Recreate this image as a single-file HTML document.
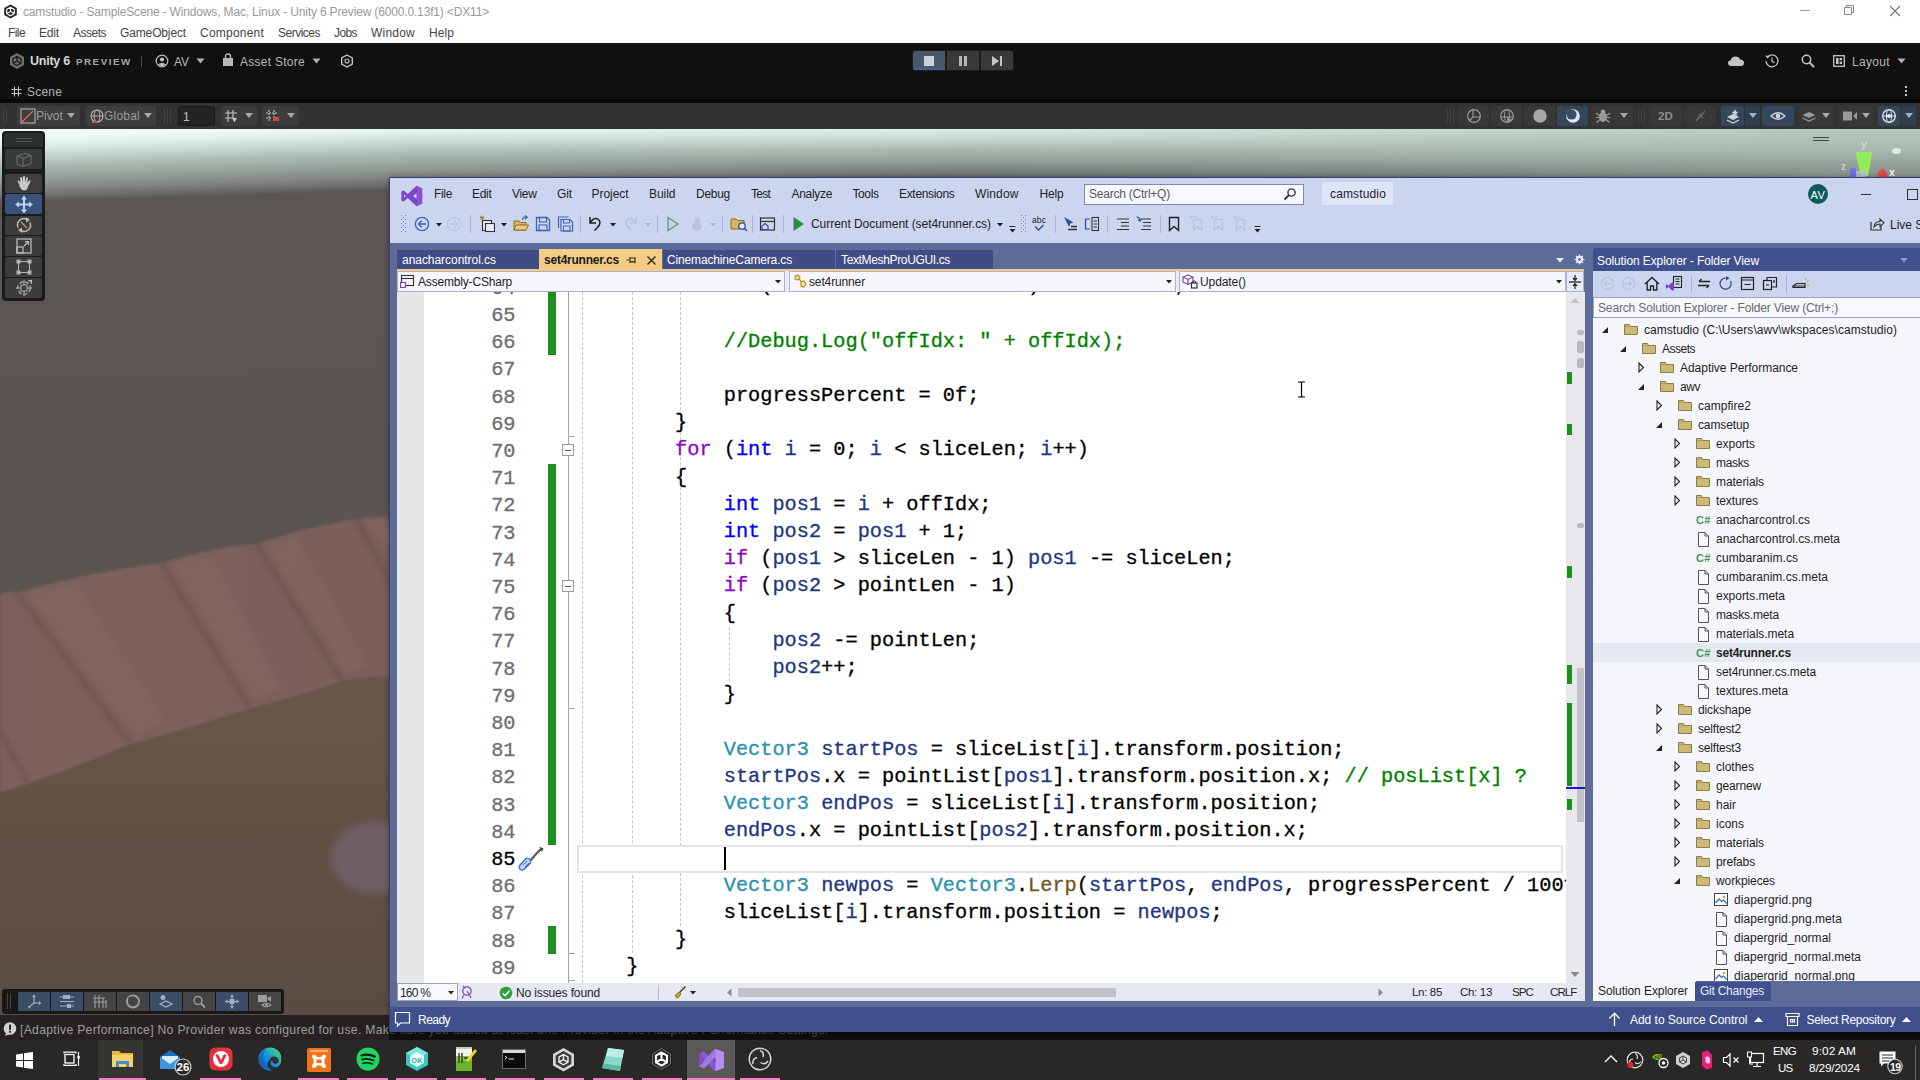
<!DOCTYPE html>
<html lang="en"><head><meta charset="utf-8"><title>camstudio - Unity / Visual Studio</title>
<style>
html,body{margin:0;padding:0;}
body{width:1920px;height:1080px;overflow:hidden;position:relative;background:#5b5653;font-family:"Liberation Sans",sans-serif;font-size:12px;}
div,span,svg{box-sizing:border-box;}
.mono{font-family:"Liberation Mono",monospace;}
#vs{position:absolute;left:0;top:0;width:1920px;height:1080px;overflow:hidden;}
.cl{position:absolute;left:577.7px;height:27.2px;line-height:27.2px;font-family:"Liberation Mono",monospace;font-size:20.3px;white-space:pre;color:#000;-webkit-text-stroke:0.3px currentColor;}
.ln{position:absolute;left:470px;width:45.5px;text-align:right;height:27.2px;line-height:27.2px;font-family:"Liberation Mono",monospace;font-size:20.3px;color:#6e6e6e;-webkit-text-stroke:0.3px currentColor;}
.k{color:#0000ff}.c{color:#8f08c4}.v{color:#1f377f}.t{color:#2b91af}.m{color:#74531f}.g{color:#008000}
</style></head><body>

<div style="position:absolute;left:0;top:128px;width:400px;height:887px;background:linear-gradient(178.2deg,#eefcf6 9.0px,#e0f1ea 17.0px,#cddbd5 26.0px,#a9b9b1 39.0px,#8f9c94 53.0px,#8a8f8c 57.0px,#858685 61.0px,#6d716f 68.0px,#5e5f5d 73.0px,#5b5653 75.0px,#5a5551 400px,#59544f 887px);"></div>
<div style="position:absolute;left:400px;top:128px;width:1520px;height:887px;background:linear-gradient(to bottom,#eefcf6 -3.6px,#e0f1ea 4.4px,#cddbd5 13.4px,#a9b9b1 26.4px,#8f9c94 40.4px,#8a8f8c 44.4px,#858685 48.4px,#6d716f 55.4px,#5e5f5d 60.4px,#5b5653 62.4px,#5a5551 400px,#59544f 887px);"></div>
<div style="position:absolute;left:400px;top:128px;width:1520px;height:60px;background:linear-gradient(to bottom,#dcf1e8 0px,#d9efe6 1px,#c4d6cd 12px,#a8b8af 22px,#96a29a 32px,#7f8883 40px,#6b716e 47px,#626765 50px,#5b5d5b 60px);-webkit-mask-image:linear-gradient(to right,rgba(0,0,0,0) 0px,rgba(0,0,0,1) 550px);mask-image:linear-gradient(to right,rgba(0,0,0,0) 0px,rgba(0,0,0,1) 550px);"></div>
<div style="position:absolute;left:400px;top:128px;width:1520px;height:60px;background:linear-gradient(to bottom,#b8cbc1 0px,#b5c8be 1px,#a9bab0 22px,#8c9891 42px,#838e88 50px,#7a847f 60px);-webkit-mask-image:linear-gradient(to right,rgba(0,0,0,0) 550px,rgba(0,0,0,1) 1450px);mask-image:linear-gradient(to right,rgba(0,0,0,0) 550px,rgba(0,0,0,1) 1450px);"></div>
<svg style="position:absolute;left:0.0px;top:128.0px;" width="400" height="888" viewBox="0 0 400 888"><defs><linearGradient id="gnd" x1="0" y1="0" x2="0" y2="1"><stop offset="0" stop-color="#68574a"/><stop offset="0.3" stop-color="#645347"/><stop offset="0.6" stop-color="#5f4f44"/><stop offset="1" stop-color="#5b4c43"/></linearGradient><linearGradient id="bnd" x1="0" y1="0" x2="1" y2="0"><stop offset="0" stop-color="#7d615d"/><stop offset="1" stop-color="#7a5f5a"/></linearGradient><filter id="bl" x="-10%" y="-10%" width="120%" height="120%"><feGaussianBlur stdDeviation="1.3"/></filter><filter id="bl2" x="-10%" y="-10%" width="120%" height="120%"><feGaussianBlur stdDeviation="2"/></filter><filter id="bl3" x="-20%" y="-20%" width="140%" height="140%"><feGaussianBlur stdDeviation="3.5"/></filter></defs><path d="M0 660 L28 652 L128 612 L250 576 L342 548 L400 545 L400 888 L0 888 Z" fill="url(#gnd)"/><path filter="url(#bl)" d="M0 466.5 Q9 463 17 464.5 Q90 444 161 435 Q210 420 256 416 Q310 398 356 391 Q380 388 400 391 L400 549 Q370 547 342 553 Q300 568 250 580.5 Q190 600 128 617 Q80 638 28 655.5 Q12 661 0 664 Z" fill="url(#bnd)"/><g filter="url(#bl3)" opacity="0.6"><path d="M28 466 L75 456 L165 592 L135 608 Z" fill="#84685f"/><path d="M172 436 L212 428 L282 562 L255 572 Z" fill="#84685f"/><path d="M266 417 L298 409 L370 540 L346 546 Z" fill="#83675f"/><path d="M364 392 L392 390 L400 420 L400 440 Z" fill="#83675f"/></g><g filter="url(#bl2)" stroke="#6d5551" stroke-width="6" fill="none" opacity="0.75"><path d="M17 465 L130 616"/><path d="M161 435 L250 580"/><path d="M256 416 L342 553"/><path d="M0 602 L28 655"/><path d="M356 391 L400 472"/></g><ellipse filter="url(#bl3)" cx="374" cy="730" rx="43" ry="36" fill="#6f6069" opacity="0.9"/></svg>
<div style="position:absolute;left:0.0px;top:0.0px;width:1920.0px;height:43.0px;background:#ffffff;"></div>
<svg style="position:absolute;left:3.0px;top:4.0px;" width="15" height="15" viewBox="0 0 15 15"><path d="M7.5 0.5 L13.8 4 L13.8 11 L7.5 14.5 L1.2 11 L1.2 4 Z" fill="#222"/><path d="M7.5 3.2 L11.3 5.4 L11.3 9.6 L7.5 11.8 L3.7 9.6 L3.7 5.4 Z M7.5 3.2 L7.5 7.5 L3.7 9.6 M7.5 7.5 L11.3 9.6" stroke="#fff" stroke-width="1.1" fill="none"/></svg>
<span style="position:absolute;left:23.0px;top:6.1px;font-size:12.00px;line-height:1;color:#999999;white-space:pre;letter-spacing:-0.158px;">camstudio - SampleScene - Windows, Mac, Linux - Unity 6 Preview (6000.0.13f1) &lt;DX11&gt;</span>
<div style="position:absolute;left:1800.0px;top:10.0px;width:10.0px;height:1.0px;background:#999;"></div>
<svg style="position:absolute;left:1843.0px;top:4.0px;" width="12" height="12" viewBox="0 0 12 12"><path d="M1.5 3.5 H8.5 V10.5 H1.5 Z M3.5 3.5 V1.5 H10.5 V8.5 H8.5" stroke="#888" stroke-width="1" fill="none"/></svg>
<svg style="position:absolute;left:1889.0px;top:5.0px;" width="12" height="12" viewBox="0 0 12 12"><path d="M1 1 L11 11 M11 1 L1 11" stroke="#777" stroke-width="1.1" fill="none"/></svg>
<span style="position:absolute;left:8.0px;top:27.1px;font-size:12.00px;line-height:1;color:#444444;white-space:pre;letter-spacing:-0.584px;">File</span>
<span style="position:absolute;left:39.0px;top:27.1px;font-size:12.00px;line-height:1;color:#444444;white-space:pre;letter-spacing:-0.169px;">Edit</span>
<span style="position:absolute;left:73.0px;top:27.1px;font-size:12.00px;line-height:1;color:#444444;white-space:pre;letter-spacing:-0.502px;">Assets</span>
<span style="position:absolute;left:120.0px;top:27.1px;font-size:12.00px;line-height:1;color:#444444;white-space:pre;letter-spacing:-0.136px;">GameObject</span>
<span style="position:absolute;left:200.0px;top:27.1px;font-size:12.00px;line-height:1;color:#444444;white-space:pre;letter-spacing:0.218px;">Component</span>
<span style="position:absolute;left:278.0px;top:27.1px;font-size:12.00px;line-height:1;color:#444444;white-space:pre;letter-spacing:-0.502px;">Services</span>
<span style="position:absolute;left:334.0px;top:27.1px;font-size:12.00px;line-height:1;color:#444444;white-space:pre;letter-spacing:-0.587px;">Jobs</span>
<span style="position:absolute;left:371.0px;top:27.1px;font-size:12.00px;line-height:1;color:#444444;white-space:pre;letter-spacing:0.220px;">Window</span>
<span style="position:absolute;left:429.0px;top:27.1px;font-size:12.00px;line-height:1;color:#444444;white-space:pre;letter-spacing:0.080px;">Help</span>
<div style="position:absolute;left:0.0px;top:43.0px;width:1920.0px;height:60.0px;background:#101010;"></div>
<div style="position:absolute;left:0.0px;top:99.0px;width:1920.0px;height:4.0px;background:#0a0a0a;"></div>
<svg style="position:absolute;left:8.0px;top:52.0px;" width="18" height="18" viewBox="0 0 18 18"><path d="M9 1 L16 5 L16 13 L9 17 L2 13 L2 5 Z" fill="#6e6e6e"/><path d="M9 4.5 L13 6.8 L13 11.2 L9 13.5 L5 11.2 L5 6.8 Z M9 4.5 L9 9 L5 11.2 M9 9 L13 11.2" stroke="#1a1a1a" stroke-width="1.3" fill="none"/></svg>
<span style="position:absolute;left:30.0px;top:55.4px;font-size:12.50px;line-height:1;color:#d8d8d8;white-space:pre;font-weight:700;letter-spacing:-0.239px;">Unity 6</span>
<span style="position:absolute;left:76.0px;top:56.8px;font-size:9.80px;line-height:1;color:#a8a8a8;white-space:pre;font-weight:700;letter-spacing:1.500px;">PREVIEW</span>
<div style="position:absolute;left:141.0px;top:56.0px;width:1.0px;height:11.0px;background:#4a4a4a;"></div>
<svg style="position:absolute;left:155.0px;top:54.0px;" width="14" height="14" viewBox="0 0 14 14"><circle cx="7" cy="7" r="5.8" stroke="#bdbdbd" stroke-width="1.2" fill="none"/><circle cx="7" cy="5.6" r="2.1" fill="#bdbdbd"/><path d="M3 10.8 Q7 6.5 11 10.8 Q7 13.5 3 10.8 Z" fill="#bdbdbd"/></svg>
<span style="position:absolute;left:174.0px;top:55.6px;font-size:12.00px;line-height:1;color:#b8b8b8;white-space:pre;letter-spacing:-0.059px;">AV</span>
<svg style="position:absolute;left:196.0px;top:58.0px;" width="9" height="6" viewBox="0 0 9 6"><path d="M0.5 0.5 H8.5 L4.5 5.5 Z" fill="#b0b0b0"/></svg>
<svg style="position:absolute;left:222.0px;top:53.0px;" width="12" height="14" viewBox="0 0 12 14"><path d="M1 5 H11 V13 H1 Z" fill="#b8b8b8"/><path d="M3.5 5 V3.5 Q3.5 1 6 1 Q8.5 1 8.5 3.5 V5" stroke="#b8b8b8" stroke-width="1.4" fill="none"/></svg>
<span style="position:absolute;left:240.0px;top:55.6px;font-size:12.00px;line-height:1;color:#b8b8b8;white-space:pre;letter-spacing:0.270px;">Asset Store</span>
<svg style="position:absolute;left:312.0px;top:58.0px;" width="9" height="6" viewBox="0 0 9 6"><path d="M0.5 0.5 H8.5 L4.5 5.5 Z" fill="#b0b0b0"/></svg>
<svg style="position:absolute;left:340.0px;top:54.0px;" width="14" height="14" viewBox="0 0 14 14"><path d="M7 1 L12.3 4 L12.3 10 L7 13 L1.7 10 L1.7 4 Z" stroke="#c4c4c4" stroke-width="1.4" fill="none"/><circle cx="7" cy="7" r="2" stroke="#c4c4c4" stroke-width="1.1" fill="none"/></svg>
<div style="position:absolute;left:912.0px;top:50.0px;width:102.0px;height:21.0px;background:#1c1c1c;border-radius:3px;"></div>
<div style="position:absolute;left:913.0px;top:51.0px;width:32.0px;height:19.0px;background:#46586a;border-radius:3px 0 0 3px;"></div>
<div style="position:absolute;left:913.0px;top:68.0px;width:32.0px;height:2.0px;background:#4a5d8c;border-radius:0 0 0 3px;"></div>
<div style="position:absolute;left:947.0px;top:51.0px;width:32.0px;height:19.0px;background:#3a3a3a;"></div>
<div style="position:absolute;left:981.0px;top:51.0px;width:32.0px;height:19.0px;background:#3a3a3a;border-radius:0 3px 3px 0;"></div>
<div style="position:absolute;left:924.0px;top:56.0px;width:10.0px;height:10.0px;background:#c8d3dd;"></div>
<div style="position:absolute;left:959.0px;top:56.0px;width:3.0px;height:10.0px;background:#b4b4b4;"></div>
<div style="position:absolute;left:964.0px;top:56.0px;width:3.0px;height:10.0px;background:#b4b4b4;"></div>
<svg style="position:absolute;left:991.0px;top:56.0px;" width="12" height="10" viewBox="0 0 12 10"><path d="M1 0 L8 5 L1 10 Z" fill="#c4c4c4"/><path d="M9 0 H11 V10 H9 Z" fill="#c4c4c4"/></svg>
<svg style="position:absolute;left:1727.0px;top:54.0px;" width="18" height="14" viewBox="0 0 18 14"><path d="M4.5 12 Q1 12 1 9 Q1 6.5 3.8 6.2 Q4.5 2.5 8.5 2.5 Q12 2.5 13 5.6 Q17 5.8 17 9 Q17 12 14 12 Z" fill="#c4c4c4"/></svg>
<svg style="position:absolute;left:1764.0px;top:53.0px;" width="16" height="16" viewBox="0 0 16 16"><path d="M3.2 4.2 A6 6 0 1 1 2 8" stroke="#c4c4c4" stroke-width="1.3" fill="none"/><path d="M1 2.5 L3.6 5.6 L6 3 Z" fill="#c4c4c4"/><path d="M8 4.5 V8.3 L10.5 9.8" stroke="#c4c4c4" stroke-width="1.2" fill="none"/></svg>
<svg style="position:absolute;left:1800.0px;top:53.0px;" width="16" height="16" viewBox="0 0 16 16"><circle cx="6.5" cy="6.5" r="4.2" stroke="#c4c4c4" stroke-width="1.5" fill="none"/><path d="M9.6 9.6 L14 14" stroke="#c4c4c4" stroke-width="2"/></svg>
<svg style="position:absolute;left:1833.0px;top:55.0px;" width="12" height="12" viewBox="0 0 12 12"><rect x="0.7" y="0.7" width="10.6" height="10.6" stroke="#c4c4c4" stroke-width="1.3" fill="none"/><rect x="3" y="3" width="2.6" height="6" fill="#c4c4c4"/><rect x="6.6" y="3" width="2.4" height="2.4" fill="#c4c4c4"/><rect x="6.6" y="6.6" width="2.4" height="2.4" fill="#c4c4c4"/></svg>
<span style="position:absolute;left:1852.0px;top:55.6px;font-size:12.00px;line-height:1;color:#b8b8b8;white-space:pre;letter-spacing:0.329px;">Layout</span>
<svg style="position:absolute;left:1897.0px;top:58.0px;" width="9" height="6" viewBox="0 0 9 6"><path d="M0.5 0.5 H8.5 L4.5 5.5 Z" fill="#b0b0b0"/></svg>
<svg style="position:absolute;left:11.0px;top:86.0px;" width="11" height="11" viewBox="0 0 11 11"><path d="M3.5 0.5 V10.5 M7.5 0.5 V10.5 M0.5 3.5 H10.5 M0.5 7.5 H10.5" stroke="#c0c0c0" stroke-width="1.1" fill="none"/></svg>
<span style="position:absolute;left:27.0px;top:86.1px;font-size:12.00px;line-height:1;color:#b0b0b0;white-space:pre;letter-spacing:0.195px;">Scene</span>
<div style="position:absolute;left:1905.0px;top:86.0px;width:2.0px;height:2.0px;background:#c4c4c4;"></div>
<div style="position:absolute;left:1905.0px;top:90.0px;width:2.0px;height:2.0px;background:#c4c4c4;"></div>
<div style="position:absolute;left:1905.0px;top:94.0px;width:2.0px;height:2.0px;background:#c4c4c4;"></div>
<div style="position:absolute;left:0.0px;top:103.0px;width:1920.0px;height:26.0px;background:#323232;"></div>
<div style="position:absolute;left:3.0px;top:109.0px;width:1.0px;height:14.0px;background:#424242;"></div>
<div style="position:absolute;left:6.0px;top:109.0px;width:1.0px;height:14.0px;background:#424242;"></div>
<div style="position:absolute;left:164.0px;top:109.0px;width:1.0px;height:14.0px;background:#424242;"></div>
<div style="position:absolute;left:167.0px;top:109.0px;width:1.0px;height:14.0px;background:#424242;"></div>
<div style="position:absolute;left:170.0px;top:109.0px;width:1.0px;height:14.0px;background:#424242;"></div>
<div style="position:absolute;left:1447.0px;top:109.0px;width:1.0px;height:14.0px;background:#424242;"></div>
<div style="position:absolute;left:1450.0px;top:109.0px;width:1.0px;height:14.0px;background:#424242;"></div>
<div style="position:absolute;left:1453.0px;top:109.0px;width:1.0px;height:14.0px;background:#424242;"></div>
<div style="position:absolute;left:1638.0px;top:109.0px;width:1.0px;height:14.0px;background:#424242;"></div>
<div style="position:absolute;left:1641.0px;top:109.0px;width:1.0px;height:14.0px;background:#424242;"></div>
<div style="position:absolute;left:1644.0px;top:109.0px;width:1.0px;height:14.0px;background:#424242;"></div>
<div style="position:absolute;left:17.0px;top:106.0px;width:63.0px;height:20.0px;background:#3e3e3e;border-radius:3px;"></div>
<svg style="position:absolute;left:20.0px;top:108.0px;" width="16" height="16" viewBox="0 0 16 16"><rect x="1" y="1" width="14" height="14" stroke="#b0b0b0" stroke-width="1.1" fill="none"/><path d="M3 13 L13 3" stroke="#d46a6a" stroke-width="1.2"/><path d="M1 13 H4" stroke="#e05050" stroke-width="2"/></svg>
<span style="position:absolute;left:36.0px;top:110.1px;font-size:12.00px;line-height:1;color:#9c9c9c;white-space:pre;letter-spacing:0.065px;">Pivot</span>
<svg style="position:absolute;left:67.0px;top:113.0px;" width="8" height="5" viewBox="0 0 8 5"><path d="M0 0 H8 L4 5 Z" fill="#a8a8a8"/></svg>
<div style="position:absolute;left:86.0px;top:106.0px;width:70.0px;height:20.0px;background:#3e3e3e;border-radius:3px;"></div>
<svg style="position:absolute;left:89.0px;top:108.0px;" width="16" height="16" viewBox="0 0 16 16"><circle cx="8" cy="8" r="6" stroke="#b0b0b0" stroke-width="1.1" fill="none"/><ellipse cx="8" cy="8" rx="2.8" ry="6" stroke="#b0b0b0" stroke-width="1" fill="none"/><path d="M2 8 H14" stroke="#b0b0b0" stroke-width="1"/><path d="M3 14 H8" stroke="#d05050" stroke-width="2"/></svg>
<span style="position:absolute;left:104.0px;top:110.1px;font-size:12.00px;line-height:1;color:#989898;white-space:pre;letter-spacing:0.219px;">Global</span>
<svg style="position:absolute;left:144.0px;top:113.0px;" width="8" height="5" viewBox="0 0 8 5"><path d="M0 0 H8 L4 5 Z" fill="#a8a8a8"/></svg>
<div style="position:absolute;left:178.0px;top:106.0px;width:37.0px;height:20.0px;background:#232323;border-radius:3px;border:1px solid #1a1a1a;"></div>
<span style="position:absolute;left:183.0px;top:110.6px;font-size:12.00px;line-height:1;color:#c0c0c0;white-space:pre;">1</span>
<div style="position:absolute;left:221.0px;top:106.0px;width:36.0px;height:20.0px;background:#3c3c3c;border-radius:3px;"></div>
<svg style="position:absolute;left:224.0px;top:109.0px;" width="14" height="14" viewBox="0 0 14 14"><path d="M4 1 V13 M9 1 V9 M1 4 H13 M1 9 H10" stroke="#c8c8c8" stroke-width="1.1" fill="none"/><path d="M8 9 L13 9 L10.5 13.5 Z" fill="#c8c8c8"/></svg>
<svg style="position:absolute;left:245.0px;top:113.0px;" width="8" height="5" viewBox="0 0 8 5"><path d="M0 0 H8 L4 5 Z" fill="#a8a8a8"/></svg>
<div style="position:absolute;left:262.0px;top:106.0px;width:37.0px;height:20.0px;background:#3c3c3c;border-radius:3px;"></div>
<svg style="position:absolute;left:265.0px;top:109.0px;" width="14" height="14" viewBox="0 0 14 14"><path d="M4 1 V13 M9 1 V8 M1 4 H13 M1 9 H7" stroke="#c8c8c8" stroke-width="1.1" fill="none" stroke-dasharray="2 1"/><path d="M8 8 H14 V12 H8 Z" fill="#d04a4a"/></svg>
<svg style="position:absolute;left:287.0px;top:113.0px;" width="8" height="5" viewBox="0 0 8 5"><path d="M0 0 H8 L4 5 Z" fill="#a8a8a8"/></svg>
<div style="position:absolute;left:1458.0px;top:106.0px;width:31.0px;height:20.0px;background:#383838;border-radius:2px;"></div>
<div style="position:absolute;left:1491.0px;top:106.0px;width:31.0px;height:20.0px;background:#383838;border-radius:2px;"></div>
<div style="position:absolute;left:1524.0px;top:106.0px;width:31.0px;height:20.0px;background:#383838;border-radius:2px;"></div>
<div style="position:absolute;left:1557.0px;top:106.0px;width:31.0px;height:20.0px;background:#33465a;border-radius:2px;"></div>
<div style="position:absolute;left:1590.0px;top:106.0px;width:43.0px;height:20.0px;background:#383838;border-radius:2px;"></div>
<div style="position:absolute;left:1649.0px;top:106.0px;width:33.0px;height:20.0px;background:#383838;border-radius:2px;"></div>
<div style="position:absolute;left:1685.0px;top:106.0px;width:31.0px;height:20.0px;background:#383838;border-radius:2px;"></div>
<div style="position:absolute;left:1721.0px;top:106.0px;width:23.0px;height:20.0px;background:#33465a;border-radius:2px;"></div>
<div style="position:absolute;left:1745.0px;top:106.0px;width:15.0px;height:20.0px;background:#2e3f52;border-radius:2px;"></div>
<div style="position:absolute;left:1762.0px;top:106.0px;width:32.0px;height:20.0px;background:#33465a;border-radius:2px;"></div>
<div style="position:absolute;left:1799.0px;top:106.0px;width:34.0px;height:20.0px;background:#383838;border-radius:2px;"></div>
<div style="position:absolute;left:1839.0px;top:106.0px;width:34.0px;height:20.0px;background:#383838;border-radius:2px;"></div>
<div style="position:absolute;left:1878.0px;top:106.0px;width:22.0px;height:20.0px;background:#33465a;border-radius:2px;"></div>
<div style="position:absolute;left:1901.0px;top:106.0px;width:15.0px;height:20.0px;background:#2e3f52;border-radius:2px;"></div>
<svg style="position:absolute;left:1466.0px;top:108.0px;" width="16" height="16" viewBox="0 0 16 16"><circle cx="8" cy="8" r="6.3" stroke="#9a9a9a" stroke-width="1.2" fill="none"/><path d="M7 1.8 V9 H14.2 M7 9 L3 13" stroke="#9a9a9a" stroke-width="1.1" fill="none"/></svg>
<svg style="position:absolute;left:1499.0px;top:108.0px;" width="16" height="16" viewBox="0 0 16 16"><circle cx="8" cy="8" r="6.3" stroke="#9a9a9a" stroke-width="1.2" fill="none"/><ellipse cx="8" cy="8" rx="2.6" ry="6.3" stroke="#9a9a9a" stroke-width="1" fill="none"/><path d="M1.7 9 H14.3" stroke="#9a9a9a" stroke-width="1" /><path d="M8 9 L8 14 L13 12 Z" fill="#9a9a9a"/></svg>
<svg style="position:absolute;left:1532.0px;top:108.0px;" width="16" height="16" viewBox="0 0 16 16"><circle cx="8" cy="8" r="6.8" fill="#a8a8a8"/></svg>
<svg style="position:absolute;left:1565.0px;top:108.0px;" width="16" height="16" viewBox="0 0 16 16"><circle cx="8" cy="8" r="6.8" fill="#dfe7f0"/><circle cx="6.6" cy="6.6" r="5" fill="#3a4e62"/></svg>
<svg style="position:absolute;left:1595.0px;top:108.0px;" width="16" height="16" viewBox="0 0 16 16"><ellipse cx="8" cy="9" rx="4" ry="5" fill="#9a9a9a"/><circle cx="8" cy="4" r="2.4" fill="#9a9a9a"/><path d="M1 5 L5 8 M15 5 L11 8 M1 9.5 H4 M12 9.5 H15 M1.5 14.5 L5 11.5 M14.5 14.5 L11 11.5" stroke="#9a9a9a" stroke-width="1.1"/></svg>
<svg style="position:absolute;left:1620.0px;top:113.0px;" width="8" height="5" viewBox="0 0 8 5"><path d="M0 0 H8 L4 5 Z" fill="#a8a8a8"/></svg>
<span style="position:absolute;left:1658.0px;top:110.9px;font-size:11.50px;line-height:1;color:#8c8c8c;white-space:pre;font-weight:700;letter-spacing:0.150px;">2D</span>
<svg style="position:absolute;left:1693.0px;top:108.0px;" width="16" height="16" viewBox="0 0 16 16"><path d="M3 13 L12 3 M6 6 L10 10" stroke="#6a6a6a" stroke-width="1.6"/></svg>
<svg style="position:absolute;left:1725.0px;top:108.0px;" width="16" height="16" viewBox="0 0 16 16"><path d="M2 9 L8 6 L14 9 L8 12 Z" fill="#cfd8e2"/><path d="M2 12 L8 15 L14 12" stroke="#cfd8e2" stroke-width="1.2" fill="none"/><path d="M10 1 L11 3.5 L13.5 4 L11.5 5.6 L12 8 L10 6.6 L8 8 L8.5 5.6 L6.5 4 L9 3.5 Z" fill="#cfd8e2"/></svg>
<svg style="position:absolute;left:1749.0px;top:113.0px;" width="8" height="5" viewBox="0 0 8 5"><path d="M0 0 H8 L4 5 Z" fill="#9fb0c2"/></svg>
<svg style="position:absolute;left:1770.0px;top:109.0px;" width="16" height="14" viewBox="0 0 16 14"><path d="M1 7 Q8 0.5 15 7 Q8 13.5 1 7 Z" stroke="#cfd8e2" stroke-width="1.3" fill="none"/><circle cx="8" cy="7" r="2.3" fill="#cfd8e2"/></svg>
<svg style="position:absolute;left:1801.0px;top:108.0px;" width="16" height="16" viewBox="0 0 16 16"><path d="M1.5 7 L8 4 L14.5 7 L8 10 Z" fill="#9a9a9a"/><path d="M1.5 10 L8 13 L14.5 10" stroke="#9a9a9a" stroke-width="1.3" fill="none"/></svg>
<svg style="position:absolute;left:1822.0px;top:113.0px;" width="8" height="5" viewBox="0 0 8 5"><path d="M0 0 H8 L4 5 Z" fill="#a8a8a8"/></svg>
<svg style="position:absolute;left:1842.0px;top:109.0px;" width="16" height="14" viewBox="0 0 16 14"><rect x="1" y="2.5" width="9" height="9" fill="#9a9a9a"/><path d="M11 7 L15 3 V11 Z" fill="#9a9a9a"/></svg>
<svg style="position:absolute;left:1862.0px;top:113.0px;" width="8" height="5" viewBox="0 0 8 5"><path d="M0 0 H8 L4 5 Z" fill="#a8a8a8"/></svg>
<svg style="position:absolute;left:1881.0px;top:108.0px;" width="16" height="16" viewBox="0 0 16 16"><circle cx="8" cy="8" r="6.3" stroke="#dfe7f0" stroke-width="1.3" fill="none"/><ellipse cx="8" cy="8" rx="2.6" ry="6.3" stroke="#dfe7f0" stroke-width="1" fill="none"/><path d="M1.7 8 H14.3" stroke="#dfe7f0" stroke-width="1"/><circle cx="8" cy="8" r="2" fill="#dfe7f0"/></svg>
<svg style="position:absolute;left:1905.0px;top:113.0px;" width="8" height="5" viewBox="0 0 8 5"><path d="M0 0 H8 L4 5 Z" fill="#9fb0c2"/></svg>
<div style="position:absolute;left:1813.0px;top:137.0px;width:16.0px;height:1.0px;background:#3c4a44;"></div>
<div style="position:absolute;left:1813.0px;top:140.0px;width:16.0px;height:1.0px;background:#3c4a44;"></div>
<svg style="position:absolute;left:1836.0px;top:134.0px;" width="70" height="44" viewBox="0 0 70 44"><defs><filter id="gb" x="-20%" y="-20%" width="140%" height="140%"><feGaussianBlur stdDeviation="0.7"/></filter></defs><g filter="url(#gb)"><path d="M20 18 H36 L35 26 L32 42 H25 L21 26 Z" fill="#92ec5c"/><path d="M14 35 Q17 33 20 35 V44 H14 Z" fill="#6a72e6"/><path d="M41 44 Q42 35 47 35 Q51 36 52 44 Z" fill="#e04a4a"/><rect x="20" y="37" width="10" height="7" fill="#b9bdd6" opacity="0.8"/><ellipse cx="60.5" cy="17" rx="4.5" ry="3" fill="#dfeae4"/></g></svg>
<span style="position:absolute;left:1861.0px;top:138.7px;font-size:11.00px;line-height:1;color:#d5e3dc;white-space:pre;font-weight:700;opacity:0.75;">y</span>
<span style="position:absolute;left:1889.0px;top:167.0px;font-size:10.50px;line-height:1;color:#f2f2f2;white-space:pre;font-weight:700;">x</span>
<span style="position:absolute;left:1841.0px;top:161.7px;font-size:10.00px;line-height:1;color:#d8e0e2;white-space:pre;font-weight:700;opacity:0.75;">z</span>
<div style="position:absolute;left:2.0px;top:131.0px;width:43.0px;height:170.0px;background:#1b1b1b;border-radius:4px;"></div>
<div style="position:absolute;left:4.0px;top:133.0px;width:39.0px;height:14.0px;background:#2b302f;border-radius:3px 3px 0 0;"></div>
<div style="position:absolute;left:16.0px;top:138.0px;width:16.0px;height:1.0px;background:#505050;"></div>
<div style="position:absolute;left:16.0px;top:141.0px;width:16.0px;height:1.0px;background:#505050;"></div>
<div style="position:absolute;left:5.0px;top:149.0px;width:37.0px;height:20.0px;background:#383b3b;border-radius:2px;"></div>
<div style="position:absolute;left:5.0px;top:174.0px;width:37.0px;height:19.0px;background:#3f3f3f;border-radius:2px;"></div>
<div style="position:absolute;left:5.0px;top:194.0px;width:37.0px;height:20.0px;background:#38527c;border-radius:2px;"></div>
<div style="position:absolute;left:5.0px;top:215.5px;width:37.0px;height:19.0px;background:#3c3c3c;border-radius:2px;"></div>
<div style="position:absolute;left:5.0px;top:236.0px;width:37.0px;height:19.5px;background:#3c3c3c;border-radius:2px;"></div>
<div style="position:absolute;left:5.0px;top:257.0px;width:37.0px;height:19.5px;background:#3c3c3c;border-radius:2px;"></div>
<div style="position:absolute;left:5.0px;top:278.0px;width:37.0px;height:19.5px;background:#3c3c3c;border-radius:2px;"></div>
<svg style="position:absolute;left:15.0px;top:151.0px;" width="18" height="17" viewBox="0 0 18 17"><path d="M2 5 L10 2.5 L16 4.5 L16 12.5 L8 15.5 L2 13 Z M2 5 L8 7.5 L16 4.5 M8 7.5 V15.5" stroke="#6a6a6a" stroke-width="1.1" fill="none"/></svg>
<svg style="position:absolute;left:15.0px;top:175.0px;" width="18" height="17" viewBox="0 0 18 17"><path d="M4 9 L2.5 6 Q3.5 5 4.8 6.5 L5.5 8 L5 2.5 Q6 1.5 7 2.5 L7.5 7 L8 1.5 Q9 0.6 10 1.5 L10 7 L11.3 2.4 Q12.4 1.8 13 2.8 L12.2 8 L14.3 5.2 Q15.6 5 15.6 6.2 L13 11.5 Q12.5 15.5 9 15.5 Q5.5 15.5 4 9 Z" fill="#c9c9c9"/></svg>
<svg style="position:absolute;left:14.0px;top:195.0px;" width="20" height="19" viewBox="0 0 20 19"><path d="M10 0.5 L13 4.5 H11 V8.5 H15 V6.5 L19 9.5 L15 12.5 V10.5 H11 V14.5 H13 L10 18.5 L7 14.5 H9 V10.5 H5 V12.5 L1 9.5 L5 6.5 V8.5 H9 V4.5 H7 Z" fill="#bcd0ea"/></svg>
<svg style="position:absolute;left:15.0px;top:216.0px;" width="18" height="18" viewBox="0 0 18 18"><path d="M3.2 11.5 A6.2 6.2 0 0 1 12 3.5" stroke="#b9b9b9" stroke-width="1.5" fill="none"/><path d="M14.8 6.5 A6.2 6.2 0 0 1 6 14.5" stroke="#b9b9b9" stroke-width="1.5" fill="none"/><path d="M11 1 L15 4 L11 6.5 Z" fill="#b9b9b9"/><path d="M7 17 L3 14 L7 11.5 Z" fill="#b9b9b9"/><path d="M6 6 L12 12" stroke="#c49a6a" stroke-width="1.2"/></svg>
<svg style="position:absolute;left:16.0px;top:238.0px;" width="16" height="16" viewBox="0 0 16 16"><rect x="1" y="1" width="14" height="14" stroke="#c0c0c0" stroke-width="1.2" fill="none"/><rect x="1" y="9" width="6" height="6" stroke="#c0c0c0" stroke-width="1.2" fill="none"/><path d="M8 8 L12.5 3.5 M9 3.5 H12.5 V7" stroke="#c0c0c0" stroke-width="1.2" fill="none"/></svg>
<svg style="position:absolute;left:15.0px;top:258.0px;" width="18" height="18" viewBox="0 0 18 18"><rect x="3.5" y="3.5" width="11" height="11" stroke="#b4b4b4" stroke-width="1.1" fill="none"/><rect x="1.5" y="1.5" width="4" height="4" fill="#b4b4b4"/><rect x="12.5" y="1.5" width="4" height="4" fill="#b4b4b4"/><rect x="1.5" y="12.5" width="4" height="4" fill="#b4b4b4"/><rect x="12.5" y="12.5" width="4" height="4" fill="#b4b4b4"/></svg>
<svg style="position:absolute;left:15.0px;top:279.0px;" width="18" height="18" viewBox="0 0 18 18"><circle cx="9" cy="9" r="6.3" stroke="#b0b0b0" stroke-width="1.3" fill="none" stroke-dasharray="4 2"/><path d="M9 1 V17 M1 9 H17" stroke="#b0b0b0" stroke-width="1.1"/><rect x="6" y="6" width="6" height="6" stroke="#b0b0b0" stroke-width="1" fill="#3c3c3c"/><path d="M13 2 L16.5 1.5 L16 5" stroke="#c8c8c8" stroke-width="1.2" fill="none"/></svg>
<div style="position:absolute;left:2.0px;top:988.5px;width:282.0px;height:25.0px;background:#191717;border-radius:3px;"></div>
<div style="position:absolute;left:7.0px;top:992.5px;width:1.0px;height:16.0px;background:#444;"></div>
<div style="position:absolute;left:10.0px;top:992.5px;width:1.0px;height:16.0px;background:#444;"></div>
<div style="position:absolute;left:18.0px;top:991.5px;width:32.0px;height:19.0px;background:#3b4d64;"></div>
<div style="position:absolute;left:51.0px;top:991.5px;width:32.0px;height:19.0px;background:#3b4d64;"></div>
<div style="position:absolute;left:84.0px;top:991.5px;width:32.0px;height:19.0px;background:#444444;"></div>
<div style="position:absolute;left:117.0px;top:991.5px;width:32.0px;height:19.0px;background:#444444;"></div>
<div style="position:absolute;left:150.0px;top:991.5px;width:32.0px;height:19.0px;background:#3b4d64;"></div>
<div style="position:absolute;left:183.0px;top:991.5px;width:32.0px;height:19.0px;background:#444444;"></div>
<div style="position:absolute;left:216.0px;top:991.5px;width:32.0px;height:19.0px;background:#3b4d64;"></div>
<div style="position:absolute;left:249.0px;top:991.5px;width:32.0px;height:19.0px;background:#444444;"></div>
<svg style="position:absolute;left:26.0px;top:993.5px;" width="16" height="15" viewBox="0 0 16 15"><path d="M8 1 V10 M3 13 L8 9 L14 9" stroke="#9fb0c4" stroke-width="1.2" fill="none"/><path d="M6 3 L8 0.5 L10 3 Z M1.5 12 L3 14.5 L5 12.5 Z M13 7 L15.5 9 L13 11 Z" fill="#9fb0c4"/></svg>
<svg style="position:absolute;left:59.0px;top:993.5px;" width="16" height="15" viewBox="0 0 16 15"><path d="M1 3 H15 M1 7.5 H15 M1 12 H15" stroke="#9fb0c4" stroke-width="1.2"/><rect x="4" y="1" width="7" height="4" fill="#9fb0c4"/><rect x="8" y="10" width="4" height="4" fill="#9fb0c4"/></svg>
<svg style="position:absolute;left:92.0px;top:993.5px;" width="16" height="15" viewBox="0 0 16 15"><path d="M3 1 V14 M7 1 V14 M11 4 V14 M14 6 V14 M1 4 H13 M1 8 H15" stroke="#9c9c9c" stroke-width="1.1"/></svg>
<svg style="position:absolute;left:125.0px;top:993.5px;" width="16" height="15" viewBox="0 0 16 15"><circle cx="8" cy="7.5" r="6" stroke="#9c9c9c" stroke-width="2" fill="none"/><circle cx="6.5" cy="6" r="3.4" fill="#444444"/></svg>
<svg style="position:absolute;left:158.0px;top:993.5px;" width="16" height="15" viewBox="0 0 16 15"><circle cx="5" cy="3.5" r="2.5" fill="#9fb0c4"/><path d="M2 10 L8 7 L14 10 L8 13 Z" stroke="#9fb0c4" stroke-width="1.2" fill="none"/></svg>
<svg style="position:absolute;left:191.0px;top:993.5px;" width="16" height="15" viewBox="0 0 16 15"><circle cx="7" cy="6.5" r="4" stroke="#9c9c9c" stroke-width="1.4" fill="none"/><path d="M10 9.5 L14 13.5" stroke="#9c9c9c" stroke-width="1.8"/></svg>
<svg style="position:absolute;left:224.0px;top:993.5px;" width="16" height="15" viewBox="0 0 16 15"><path d="M8 0.5 V14.5 M1 7.5 H15" stroke="#9fb0c4" stroke-width="1.2"/><rect x="5.5" y="5" width="5" height="5" fill="#9fb0c4"/><path d="M6 3 L8 0.5 L10 3 Z M6 12 L8 14.5 L10 12 Z M3.5 5.5 L1 7.5 L3.5 9.5 Z M12.5 5.5 L15 7.5 L12.5 9.5 Z" fill="#9fb0c4"/></svg>
<svg style="position:absolute;left:257.0px;top:993.5px;" width="16" height="15" viewBox="0 0 16 15"><rect x="1" y="1" width="9" height="7" fill="#9c9c9c"/><path d="M10 4.5 L14 2 V8 Z" fill="#9c9c9c"/><path d="M5 11 Q9 7.5 14 11 Q9 14.5 5 11 Z" stroke="#9c9c9c" stroke-width="1.1" fill="none"/><circle cx="9.5" cy="11" r="1.3" fill="#9c9c9c"/></svg>
<div style="position:absolute;left:0.0px;top:1015.0px;width:1920.0px;height:25.0px;background:#252221;"></div>
<div style="position:absolute;left:389.0px;top:1030.0px;width:1531.0px;height:10.0px;background:#131212;"></div>
<svg style="position:absolute;left:3.0px;top:1022.0px;" width="14" height="14" viewBox="0 0 14 14"><circle cx="7" cy="6.5" r="6.3" fill="#d0d0d0"/><path d="M3 11 L2 14 L6 12.3 Z" fill="#d0d0d0"/><rect x="6.1" y="2.6" width="1.9" height="5.2" fill="#222"/><rect x="6.1" y="8.8" width="1.9" height="1.9" fill="#222"/></svg>
<span style="position:absolute;left:20.0px;top:1023.5px;font-size:12.20px;line-height:1;color:#9c9c9c;white-space:pre;letter-spacing:0.295px;">[Adaptive Performance] No Provider was configured for use. Make sure you added at least one Provider in the Adaptive Performance Settings.</span>
<div style="position:absolute;left:389.0px;top:1030.0px;width:1531.0px;height:10.0px;background:rgba(12,12,12,0.55);"></div>
<div style="position:absolute;left:389px;top:177px;width:1541px;height:855px;background:#5d6b99;border:1px solid #353d70;box-shadow:0 1px 5px 0 rgba(0,0,0,0.42);"></div>
<div style="position:absolute;left:390.0px;top:178.0px;width:1530.0px;height:65.0px;background:#ccd5f0;"></div>
<svg style="position:absolute;left:401.0px;top:185.0px;" width="22" height="22" viewBox="0 0 22 22"><path d="M15.5 0.8 L21.2 3.4 V18.6 L15.5 21.2 L6.8 13 L2.6 16.6 L0.4 15.4 V6.6 L2.6 5.4 L6.8 9 Z M15.6 8.3 L12.2 11 L15.6 13.7 Z M3 9.5 V12.5 L4.8 11 Z" fill="#7d45c9" fill-rule="evenodd"/><path d="M15.6 0.8 L21.2 3.4 V18.6 L15.6 21.2 Z" fill="#9552d6" opacity="0.55"/></svg>
<span style="position:absolute;left:434.0px;top:187.6px;font-size:12.00px;line-height:1;color:#1e1e1e;white-space:pre;letter-spacing:-0.334px;">File</span>
<span style="position:absolute;left:472.0px;top:187.6px;font-size:12.00px;line-height:1;color:#1e1e1e;white-space:pre;letter-spacing:-0.294px;">Edit</span>
<span style="position:absolute;left:512.0px;top:187.6px;font-size:12.00px;line-height:1;color:#1e1e1e;white-space:pre;letter-spacing:-0.323px;">View</span>
<span style="position:absolute;left:557.0px;top:187.6px;font-size:12.00px;line-height:1;color:#1e1e1e;white-space:pre;letter-spacing:-0.111px;">Git</span>
<span style="position:absolute;left:591.5px;top:187.6px;font-size:12.00px;line-height:1;color:#1e1e1e;white-space:pre;letter-spacing:-0.049px;">Project</span>
<span style="position:absolute;left:649.0px;top:187.6px;font-size:12.00px;line-height:1;color:#1e1e1e;white-space:pre;letter-spacing:-0.037px;">Build</span>
<span style="position:absolute;left:696.0px;top:187.6px;font-size:12.00px;line-height:1;color:#1e1e1e;white-space:pre;letter-spacing:-0.272px;">Debug</span>
<span style="position:absolute;left:751.0px;top:187.6px;font-size:12.00px;line-height:1;color:#1e1e1e;white-space:pre;letter-spacing:-0.752px;">Test</span>
<span style="position:absolute;left:791.5px;top:187.6px;font-size:12.00px;line-height:1;color:#1e1e1e;white-space:pre;letter-spacing:-0.313px;">Analyze</span>
<span style="position:absolute;left:852.5px;top:187.6px;font-size:12.00px;line-height:1;color:#1e1e1e;white-space:pre;letter-spacing:-0.402px;">Tools</span>
<span style="position:absolute;left:899.0px;top:187.6px;font-size:12.00px;line-height:1;color:#1e1e1e;white-space:pre;letter-spacing:-0.320px;">Extensions</span>
<span style="position:absolute;left:975.0px;top:187.6px;font-size:12.00px;line-height:1;color:#1e1e1e;white-space:pre;letter-spacing:0.137px;">Window</span>
<span style="position:absolute;left:1039.5px;top:187.6px;font-size:12.00px;line-height:1;color:#1e1e1e;white-space:pre;letter-spacing:-0.170px;">Help</span>
<div style="position:absolute;left:1084.0px;top:183.5px;width:220.0px;height:21.5px;background:#f7f8fd;border:1px solid #7f8ab3;"></div>
<span style="position:absolute;left:1089.0px;top:187.6px;font-size:12.00px;line-height:1;color:#5a5a5a;white-space:pre;letter-spacing:-0.223px;">Search (Ctrl+Q)</span>
<svg style="position:absolute;left:1283.0px;top:187.0px;" width="14" height="14" viewBox="0 0 14 14"><circle cx="8.5" cy="5.5" r="3.6" stroke="#333" stroke-width="1.4" fill="none"/><path d="M6 8 L1.5 12.5" stroke="#333" stroke-width="1.8"/></svg>
<div style="position:absolute;left:1322.0px;top:182.0px;width:71.0px;height:23.0px;background:#dfe5f8;"></div>
<span style="position:absolute;left:1330.0px;top:187.6px;font-size:12.00px;line-height:1;color:#1e1e1e;white-space:pre;letter-spacing:0.146px;">camstudio</span>
<div style="position:absolute;left:1807.5px;top:184px;width:20px;height:20px;border-radius:10px;background:#0a5c5c;"></div>
<span style="position:absolute;left:1810.5px;top:189.5px;font-size:11.00px;line-height:1;color:#ffffff;white-space:pre;letter-spacing:0.571px;">AV</span>
<div style="position:absolute;left:1861.0px;top:194.0px;width:10.0px;height:1.0px;background:#333;"></div>
<div style="position:absolute;left:1907.0px;top:189.0px;width:11.0px;height:11.0px;background:transparent;border:1px solid #333;"></div>
<svg style="position:absolute;left:1869.0px;top:216.0px;" width="16" height="16" viewBox="0 0 16 16"><path d="M2 6 V14 H12 V10" stroke="#333" stroke-width="1.2" fill="none"/><path d="M5 11 Q5.5 5.5 11 5.5 V3 L15 6.8 L11 10.5 V8 Q7.5 8 5 11 Z" stroke="#333" stroke-width="1.1" fill="none"/></svg>
<span style="position:absolute;left:1890.0px;top:218.6px;font-size:12.00px;line-height:1;color:#1e1e1e;white-space:pre;">Live Share</span>
<div style="position:absolute;left:470.0px;top:215.0px;width:1.0px;height:18.0px;background:#a9b3d6;"></div>
<div style="position:absolute;left:580.0px;top:215.0px;width:1.0px;height:18.0px;background:#a9b3d6;"></div>
<div style="position:absolute;left:657.0px;top:215.0px;width:1.0px;height:18.0px;background:#a9b3d6;"></div>
<div style="position:absolute;left:722.0px;top:215.0px;width:1.0px;height:18.0px;background:#a9b3d6;"></div>
<div style="position:absolute;left:752.0px;top:215.0px;width:1.0px;height:18.0px;background:#a9b3d6;"></div>
<div style="position:absolute;left:783.0px;top:215.0px;width:1.0px;height:18.0px;background:#a9b3d6;"></div>
<div style="position:absolute;left:1055.0px;top:215.0px;width:1.0px;height:18.0px;background:#a9b3d6;"></div>
<div style="position:absolute;left:1107.0px;top:215.0px;width:1.0px;height:18.0px;background:#a9b3d6;"></div>
<div style="position:absolute;left:1160.0px;top:215.0px;width:1.0px;height:18.0px;background:#a9b3d6;"></div>
<svg style="position:absolute;left:401.0px;top:214.0px;" width="6" height="20" viewBox="0 0 6 20"><g fill="#7d86ad"><rect x="0" y="1" width="1" height="1"/><rect x="2" y="3" width="1" height="1"/><rect x="0" y="5" width="1" height="1"/><rect x="2" y="7" width="1" height="1"/><rect x="0" y="9" width="1" height="1"/><rect x="2" y="11" width="1" height="1"/><rect x="0" y="13" width="1" height="1"/><rect x="2" y="15" width="1" height="1"/><rect x="0" y="17" width="1" height="1"/><rect x="4" y="1" width="1" height="1"/><rect x="4" y="5" width="1" height="1"/><rect x="4" y="9" width="1" height="1"/><rect x="4" y="13" width="1" height="1"/><rect x="4" y="17" width="1" height="1"/></g></svg>
<svg style="position:absolute;left:1021.0px;top:214.0px;" width="6" height="20" viewBox="0 0 6 20"><g fill="#7d86ad"><rect x="0" y="1" width="1" height="1"/><rect x="2" y="3" width="1" height="1"/><rect x="0" y="5" width="1" height="1"/><rect x="2" y="7" width="1" height="1"/><rect x="0" y="9" width="1" height="1"/><rect x="2" y="11" width="1" height="1"/><rect x="0" y="13" width="1" height="1"/><rect x="2" y="15" width="1" height="1"/><rect x="0" y="17" width="1" height="1"/><rect x="4" y="1" width="1" height="1"/><rect x="4" y="5" width="1" height="1"/><rect x="4" y="9" width="1" height="1"/><rect x="4" y="13" width="1" height="1"/><rect x="4" y="17" width="1" height="1"/></g></svg>
<svg style="position:absolute;left:414.0px;top:216.0px;" width="16" height="16" viewBox="0 0 16 16"><circle cx="8" cy="8" r="6.6" stroke="#3f62b8" stroke-width="1.3" fill="none"/><path d="M12 8 H4.8 M7.8 4.8 L4.6 8 L7.8 11.2" stroke="#3f62b8" stroke-width="1.4" fill="none"/></svg>
<svg style="position:absolute;left:436.0px;top:222.5px;" width="6" height="4" viewBox="0 0 6 4"><path d="M0 0 H6 L3 3.5 Z" fill="#1e1e1e"/></svg>
<svg style="position:absolute;left:446.0px;top:216.0px;" width="16" height="16" viewBox="0 0 16 16"><circle cx="8" cy="8" r="6.6" stroke="#bcc5e2" stroke-width="1.3" fill="none"/><path d="M4 8 H11.2 M8.2 4.8 L11.4 8 L8.2 11.2" stroke="#bcc5e2" stroke-width="1.4" fill="none"/></svg>
<svg style="position:absolute;left:479.0px;top:215.0px;" width="17" height="18" viewBox="0 0 17 18"><rect x="3.5" y="5.5" width="9" height="10" stroke="#333" stroke-width="1.1" fill="#e8ecf8"/><rect x="6.5" y="8.5" width="9" height="8" stroke="#333" stroke-width="1.1" fill="#e8ecf8"/><path d="M3 0.5 V5 M0.8 2.8 H5.2 M1.4 1.2 L4.6 4.4 M4.6 1.2 L1.4 4.4" stroke="#a07c18" stroke-width="1"/></svg>
<svg style="position:absolute;left:501.0px;top:222.5px;" width="6" height="4" viewBox="0 0 6 4"><path d="M0 0 H6 L3 3.5 Z" fill="#1e1e1e"/></svg>
<svg style="position:absolute;left:513.0px;top:215.0px;" width="17" height="18" viewBox="0 0 17 18"><path d="M1 6 H6 L7.5 7.5 H13 V15 H1 Z" fill="#dcb767" stroke="#8e6d1c" stroke-width="1"/><path d="M3 10 H15.5 L13 15 H1 Z" fill="#e9cc86" stroke="#8e6d1c" stroke-width="1"/><path d="M9.5 5 Q10 1.5 13.5 2 M12 0.3 L14.2 2.2 L12 4" stroke="#3f62b8" stroke-width="1.2" fill="none"/></svg>
<svg style="position:absolute;left:535.0px;top:216.0px;" width="16" height="16" viewBox="0 0 16 16"><path d="M1.5 1.5 H12 L14.5 4 V14.5 H1.5 Z" stroke="#3f62b8" stroke-width="1.3" fill="none"/><rect x="4.5" y="1.5" width="7" height="4.5" stroke="#3f62b8" stroke-width="1.1" fill="none"/><rect x="4" y="9" width="8" height="5.5" stroke="#3f62b8" stroke-width="1.1" fill="none"/></svg>
<svg style="position:absolute;left:557.0px;top:216.0px;" width="17" height="16" viewBox="0 0 17 16"><path d="M4 3.5 H13 L15.5 6 V15 H4 Z" stroke="#3f62b8" stroke-width="1.2" fill="none"/><rect x="6.5" y="3.5" width="6" height="3.5" stroke="#3f62b8" stroke-width="1" fill="none"/><rect x="6.5" y="10" width="6.5" height="5" stroke="#3f62b8" stroke-width="1" fill="none"/><path d="M1.5 12 V1 H11.5" stroke="#3f62b8" stroke-width="1.2" fill="none"/></svg>
<svg style="position:absolute;left:587.0px;top:215.0px;" width="16" height="18" viewBox="0 0 16 18"><path d="M3 2 V8 H9 M3.4 7.6 Q7 1.5 11.5 4.5 Q15 8 10 13 L7.5 15.5" stroke="#222" stroke-width="1.5" fill="none"/></svg>
<svg style="position:absolute;left:610.0px;top:222.5px;" width="6" height="4" viewBox="0 0 6 4"><path d="M0 0 H6 L3 3.5 Z" fill="#1e1e1e"/></svg>
<svg style="position:absolute;left:623.0px;top:215.0px;" width="16" height="18" viewBox="0 0 16 18"><path d="M13 2 V8 H7 M12.6 7.6 Q9 1.5 4.5 4.5 Q1 8 6 13 L8.5 15.5" stroke="#b6bfdc" stroke-width="1.5" fill="none"/></svg>
<svg style="position:absolute;left:645.0px;top:222.5px;" width="6" height="4" viewBox="0 0 6 4"><path d="M0 0 H6 L3 3.5 Z" fill="#a8b1d0"/></svg>
<svg style="position:absolute;left:666.0px;top:215.0px;" width="14" height="18" viewBox="0 0 14 18"><path d="M2 2.5 L12 9 L2 15.5 Z" stroke="#5f9f74" stroke-width="1.3" fill="none"/></svg>
<svg style="position:absolute;left:689.0px;top:215.0px;" width="16" height="18" viewBox="0 0 16 18"><path d="M8 2 Q13 5 11 9 Q14 10 12 14 Q8 17 4 14 Q1 9 6 7 Q5 4 8 2 Z" fill="#b9c1dc"/></svg>
<svg style="position:absolute;left:710.0px;top:222.5px;" width="6" height="4" viewBox="0 0 6 4"><path d="M0 0 H6 L3 3.5 Z" fill="#a8b1d0"/></svg>
<svg style="position:absolute;left:730.0px;top:215.0px;" width="18" height="18" viewBox="0 0 18 18"><path d="M1 4 H6 L7.5 5.5 H14 V14 H1 Z" fill="#d7b566" stroke="#8e6d1c" stroke-width="1"/><circle cx="12" cy="11" r="3.2" stroke="#2d4f9e" stroke-width="1.3" fill="#e8ecf8"/><path d="M14.3 13.3 L17 16" stroke="#2d4f9e" stroke-width="1.6"/></svg>
<svg style="position:absolute;left:759.0px;top:215.0px;" width="17" height="18" viewBox="0 0 17 18"><rect x="1.5" y="3" width="14" height="12" stroke="#333" stroke-width="1.2" fill="none"/><path d="M1.5 6.5 H15.5" stroke="#333" stroke-width="1.2"/><path d="M3 14.5 V11 L6 8.5 L9 11 V14.5 Z" stroke="#2d4f9e" stroke-width="1.2" fill="#ccd5f0"/></svg>
<svg style="position:absolute;left:792.0px;top:216.0px;" width="13" height="16" viewBox="0 0 13 16"><path d="M1.5 1 L12 8 L1.5 15 Z" fill="#2e8b3c"/></svg>
<span style="position:absolute;left:811.0px;top:217.8px;font-size:12.00px;line-height:1;color:#1e1e1e;white-space:pre;letter-spacing:-0.044px;">Current Document (set4runner.cs)</span>
<svg style="position:absolute;left:997.0px;top:222.5px;" width="6" height="4" viewBox="0 0 6 4"><path d="M0 0 H6 L3 3.5 Z" fill="#1e1e1e"/></svg>
<svg style="position:absolute;left:1009.0px;top:226.0px;" width="7" height="7" viewBox="0 0 7 7"><path d="M0.5 0.5 H6.5" stroke="#222" stroke-width="1"/><path d="M0.5 3 H6.5 L3.5 6.5 Z" fill="#222"/></svg>
<span style="position:absolute;left:1032.0px;top:216.1px;font-size:8.50px;line-height:1;color:#222;white-space:pre;letter-spacing:0.099px;">abc</span>
<svg style="position:absolute;left:1033.0px;top:224.0px;" width="12" height="8" viewBox="0 0 12 8"><path d="M2 2.5 L5.5 6 L10.5 1" stroke="#2d4f9e" stroke-width="1.4" fill="none"/></svg>
<svg style="position:absolute;left:1062.0px;top:215.0px;" width="16" height="18" viewBox="0 0 16 18"><path d="M2 2 L7 12 L8.2 8.5 L11.5 7.5 Z" fill="#2d4f9e"/><path d="M6 14.5 H15 M9 11.5 H15" stroke="#333" stroke-width="1.3"/></svg>
<svg style="position:absolute;left:1084.0px;top:215.0px;" width="16" height="18" viewBox="0 0 16 18"><path d="M1.5 4 H6 M1.5 4 V14 H6" stroke="#2d4f9e" stroke-width="1.2" fill="none"/><rect x="8" y="2.5" width="6.5" height="13" stroke="#333" stroke-width="1.1" fill="none"/><path d="M9.5 6 H13 M9.5 9 H13 M9.5 12 H13" stroke="#333" stroke-width="1"/></svg>
<svg style="position:absolute;left:1115.0px;top:215.0px;" width="16" height="18" viewBox="0 0 16 18"><path d="M2 4 H14 M6 7.5 H14 M6 11 H14 M2 14.5 H14" stroke="#333" stroke-width="1.2"/></svg>
<svg style="position:absolute;left:1135.0px;top:215.0px;" width="17" height="18" viewBox="0 0 17 18"><path d="M6 4 H16 M8 7.5 H16 M8 11 H16 M6 14.5 H16" stroke="#333" stroke-width="1.2"/><path d="M1.5 2 Q5 2 5 5.5 M3 4.3 L5 6.2 L6.5 4" stroke="#2d4f9e" stroke-width="1.1" fill="none"/></svg>
<svg style="position:absolute;left:1167.0px;top:215.0px;" width="14" height="18" viewBox="0 0 14 18"><path d="M2.5 2.5 H11.5 V15.5 L7 11.5 L2.5 15.5 Z" stroke="#222" stroke-width="1.4" fill="none"/></svg>
<svg style="position:absolute;left:1189.0px;top:215.0px;" width="16" height="18" viewBox="0 0 16 18"><path d="M4.5 4.5 H12.5 V15 L8.5 11.5 L4.5 15 Z" stroke="#b9c1dc" stroke-width="1.3" fill="none"/><path d="M1 2 H8 M1 2 L3 0.5 M1 2 L3 3.5" stroke="#b9c1dc" stroke-width="1"/></svg>
<svg style="position:absolute;left:1210.0px;top:215.0px;" width="16" height="18" viewBox="0 0 16 18"><path d="M4.5 4.5 H12.5 V15 L8.5 11.5 L4.5 15 Z" stroke="#b9c1dc" stroke-width="1.3" fill="none"/><path d="M1 2 H8 M1 2 L3 0.5 M1 2 L3 3.5" stroke="#b9c1dc" stroke-width="1"/></svg>
<svg style="position:absolute;left:1232.0px;top:215.0px;" width="16" height="18" viewBox="0 0 16 18"><path d="M4.5 4.5 H12.5 V15 L8.5 11.5 L4.5 15 Z" stroke="#b9c1dc" stroke-width="1.3" fill="none"/><path d="M1 2 H8 M1 2 L3 0.5 M1 2 L3 3.5" stroke="#b9c1dc" stroke-width="1"/></svg>
<svg style="position:absolute;left:1254.0px;top:226.0px;" width="7" height="7" viewBox="0 0 7 7"><path d="M0.5 0.5 H6.5" stroke="#222" stroke-width="1"/><path d="M0.5 3 H6.5 L3.5 6.5 Z" fill="#222"/></svg>
<div style="position:absolute;left:397.0px;top:250.0px;width:142.0px;height:20.0px;background:#3f4c85;"></div>
<div style="position:absolute;left:539.0px;top:249.0px;width:123.0px;height:21.0px;background:#f5cc84;"></div>
<div style="position:absolute;left:663.0px;top:250.0px;width:172.0px;height:20.0px;background:#3f4c85;"></div>
<div style="position:absolute;left:836.0px;top:250.0px;width:157.0px;height:20.0px;background:#3f4c85;"></div>
<div style="position:absolute;left:397.0px;top:269.0px;width:1187.0px;height:2.0px;background:#f5cc84;"></div>
<span style="position:absolute;left:402.0px;top:253.6px;font-size:12.00px;line-height:1;color:#ffffff;white-space:pre;letter-spacing:-0.042px;">anacharcontrol.cs</span>
<span style="position:absolute;left:544.0px;top:254.1px;font-size:12.00px;line-height:1;color:#1a1a1a;white-space:pre;font-weight:700;letter-spacing:-0.234px;">set4runner.cs</span>
<svg style="position:absolute;left:626.0px;top:254.0px;" width="13" height="12" viewBox="0 0 13 12"><path d="M0.5 6 H4 M4 3 V9 M4 4 H9 V8 H4 M9 3.2 V9.5 M9 7.6 H4" stroke="#3a3320" stroke-width="1.1" fill="none"/></svg>
<svg style="position:absolute;left:646.0px;top:254.5px;" width="11" height="11" viewBox="0 0 11 11"><path d="M1.5 1.5 L9.5 9.5 M9.5 1.5 L1.5 9.5" stroke="#2a2418" stroke-width="1.3"/></svg>
<span style="position:absolute;left:667.0px;top:253.6px;font-size:12.00px;line-height:1;color:#ffffff;white-space:pre;letter-spacing:-0.152px;">CinemachineCamera.cs</span>
<span style="position:absolute;left:841.0px;top:253.6px;font-size:12.00px;line-height:1;color:#ffffff;white-space:pre;letter-spacing:-0.353px;">TextMeshProUGUI.cs</span>
<svg style="position:absolute;left:1556.0px;top:258.0px;" width="8" height="5" viewBox="0 0 8 5"><path d="M0 0 H8 L4 4.5 Z" fill="#e8ecf8"/></svg>
<svg style="position:absolute;left:1574.0px;top:253.5px;" width="11" height="11" viewBox="0 0 13 13"><circle cx="6.5" cy="6.5" r="3.3" stroke="#e8ecf8" stroke-width="2" fill="none"/><path d="M6.5 0.5 V12.5 M0.5 6.5 H12.5 M2.3 2.3 L10.7 10.7 M10.7 2.3 L2.3 10.7" stroke="#e8ecf8" stroke-width="1.4"/><circle cx="6.5" cy="6.5" r="1.6" fill="#5d6b99"/></svg>
<div style="position:absolute;left:397.0px;top:271.0px;width:1187.0px;height:21.0px;background:#e9ecf7;"></div>
<div style="position:absolute;left:397.0px;top:271.0px;width:388.0px;height:21.0px;background:#f6f7fd;border:1px solid #aab2cf;"></div>
<div style="position:absolute;left:789.0px;top:271.0px;width:387.0px;height:21.0px;background:#f6f7fd;border:1px solid #aab2cf;"></div>
<div style="position:absolute;left:1179.0px;top:271.0px;width:387.0px;height:21.0px;background:#f6f7fd;border:1px solid #aab2cf;"></div>
<svg style="position:absolute;left:400.0px;top:274.0px;" width="15" height="15" viewBox="0 0 15 15"><rect x="1.5" y="1.5" width="12" height="10" stroke="#333" stroke-width="1.1" fill="none"/><path d="M1.5 4.5 H13.5" stroke="#333" stroke-width="1.1"/><rect x="0.5" y="8.5" width="5" height="5" stroke="#7a3fb0" stroke-width="1.1" fill="#f6f7fd"/></svg>
<span style="position:absolute;left:418.0px;top:276.1px;font-size:12.00px;line-height:1;color:#1e1e1e;white-space:pre;letter-spacing:-0.180px;">Assembly-CSharp</span>
<svg style="position:absolute;left:775.0px;top:280.0px;" width="6" height="4" viewBox="0 0 6 4"><path d="M0 0 H6 L3 3.5 Z" fill="#222"/></svg>
<svg style="position:absolute;left:792.0px;top:274.0px;" width="16" height="15" viewBox="0 0 16 15"><path d="M3 2 L6 1 L8 3.5 L6 6 L3 5 Z M9 8 L12 7 L14 10 L12 13 L9 12 Z M7 5 L10 8" stroke="#b98d1f" stroke-width="1.1" fill="#f3dfa0"/></svg>
<span style="position:absolute;left:809.0px;top:276.1px;font-size:12.00px;line-height:1;color:#1e1e1e;white-space:pre;letter-spacing:-0.136px;">set4runner</span>
<svg style="position:absolute;left:1166.0px;top:280.0px;" width="6" height="4" viewBox="0 0 6 4"><path d="M0 0 H6 L3 3.5 Z" fill="#222"/></svg>
<svg style="position:absolute;left:1182.0px;top:274.0px;" width="17" height="15" viewBox="0 0 17 15"><path d="M6 1 L11 3 V8 L6 10.5 L1 8 V3 Z M1 3 L6 5.5 L11 3 M6 5.5 V10.5" stroke="#7a3fb0" stroke-width="1.1" fill="none"/><rect x="9.5" y="9" width="5.5" height="5" stroke="#222" stroke-width="1.1" fill="#f6f7fd"/><path d="M10.8 9 V7.6 Q12.2 6 13.6 7.6 V9" stroke="#222" stroke-width="1" fill="none"/></svg>
<span style="position:absolute;left:1200.0px;top:276.1px;font-size:12.00px;line-height:1;color:#1e1e1e;white-space:pre;letter-spacing:-0.085px;">Update()</span>
<svg style="position:absolute;left:1556.0px;top:280.0px;" width="6" height="4" viewBox="0 0 6 4"><path d="M0 0 H6 L3 3.5 Z" fill="#222"/></svg>
<div style="position:absolute;left:1566.0px;top:271.0px;width:18.0px;height:21.0px;background:#e9ecf7;border:1px solid #aab2cf;"></div>
<svg style="position:absolute;left:1568.0px;top:274.0px;" width="14" height="16" viewBox="0 0 14 16"><path d="M1 8 H13" stroke="#222" stroke-width="1.3"/><path d="M7 1 V6 M5 4 L7 6.3 L9 4 M7 15 V10 M5 12 L7 9.7 L9 12" stroke="#222" stroke-width="1.2" fill="none"/></svg>
<div id="ed" style="position:absolute;left:397px;top:292px;width:1169px;height:691px;background:#ffffff;overflow:hidden;">
</div>
<div style="position:absolute;left:0;top:292px;width:1566px;height:691px;overflow:hidden;"><div style="position:absolute;left:0;top:-292px;width:1566px;height:1080px;">
<div style="position:absolute;left:397.0px;top:292.0px;width:27.0px;height:691.0px;background:#e6e7e8;"></div>
<div style="position:absolute;left:397.0px;top:292.0px;width:1.0px;height:691.0px;background:#dfe8f8;"></div>
<div style="position:absolute;left:548.0px;top:292.0px;width:8.0px;height:63.0px;background:#1f8f1f;"></div>
<div style="position:absolute;left:548.0px;top:464.0px;width:8.0px;height:381.0px;background:#1f8f1f;"></div>
<div style="position:absolute;left:548.0px;top:926.0px;width:8.0px;height:27.5px;background:#1f8f1f;"></div>
<div style="position:absolute;left:568.0px;top:292.0px;width:1.0px;height:691.0px;background:#a5a5a5;"></div>
<div style="position:absolute;left:568.0px;top:436.0px;width:7.0px;height:1.0px;background:#a5a5a5;"></div>
<div style="position:absolute;left:568.0px;top:708.0px;width:7.0px;height:1.0px;background:#a5a5a5;"></div>
<div style="position:absolute;left:568.0px;top:953.0px;width:7.0px;height:1.0px;background:#a5a5a5;"></div>
<div style="position:absolute;left:568.0px;top:980.0px;width:7.0px;height:1.0px;background:#a5a5a5;"></div>
<div style="position:absolute;left:562.0px;top:444.0px;width:12.0px;height:12.0px;background:#ffffff;border:1px solid #9a9a9a;"></div>
<div style="position:absolute;left:565.0px;top:449.5px;width:6.0px;height:1.0px;background:#555;"></div>
<div style="position:absolute;left:562.0px;top:580.0px;width:12.0px;height:12.0px;background:#ffffff;border:1px solid #9a9a9a;"></div>
<div style="position:absolute;left:565.0px;top:585.5px;width:6.0px;height:1.0px;background:#555;"></div>
<div style="position:absolute;left:582px;top:292.0px;width:0;height:691.0px;border-left:1px dashed #c4c4c4;"></div>
<div style="position:absolute;left:632px;top:292.0px;width:0;height:661.0px;border-left:1px dashed #c4c4c4;"></div>
<div style="position:absolute;left:680px;top:292.0px;width:0;height:634.0px;border-left:1px dashed #c4c4c4;"></div>
<div style="position:absolute;left:729px;top:627.0px;width:0;height:54.0px;border-left:1px dashed #c4c4c4;"></div>
<div style="position:absolute;left:577.0px;top:845.0px;width:986.0px;height:27.5px;background:#ffffff;border:2px solid #e4e4e4;"></div>
<div style="position:absolute;left:724.0px;top:847.0px;width:1.6px;height:23.0px;background:#000;"></div>
<div class="ln" style="top:274.7px;color:#6e6e6e">64</div>
<div class="cl" style="top:271.5px">            <span class="c">if</span> (offIdx + 1 &gt; sliceLen) offIdx = 0;</div>
<div class="ln" style="top:301.9px;color:#6e6e6e">65</div>
<div class="ln" style="top:329.1px;color:#6e6e6e">66</div>
<div class="cl" style="top:327.5px">            <span class="g">//Debug.Log("offIdx: " + offIdx);</span></div>
<div class="ln" style="top:356.3px;color:#6e6e6e">67</div>
<div class="ln" style="top:383.5px;color:#6e6e6e">68</div>
<div class="cl" style="top:381.9px">            progressPercent = 0f;</div>
<div class="ln" style="top:410.7px;color:#6e6e6e">69</div>
<div class="cl" style="top:409.1px">        }</div>
<div class="ln" style="top:437.9px;color:#6e6e6e">70</div>
<div class="cl" style="top:436.3px">        <span class="c">for</span> (<span class="k">int</span> <span class="v">i</span> = 0; <span class="v">i</span> &lt; sliceLen; <span class="v">i</span>++)</div>
<div class="ln" style="top:465.1px;color:#6e6e6e">71</div>
<div class="cl" style="top:463.5px">        {</div>
<div class="ln" style="top:492.3px;color:#6e6e6e">72</div>
<div class="cl" style="top:490.7px">            <span class="k">int</span> <span class="v">pos1</span> = <span class="v">i</span> + offIdx;</div>
<div class="ln" style="top:519.5px;color:#6e6e6e">73</div>
<div class="cl" style="top:517.9px">            <span class="k">int</span> <span class="v">pos2</span> = <span class="v">pos1</span> + 1;</div>
<div class="ln" style="top:546.7px;color:#6e6e6e">74</div>
<div class="cl" style="top:545.1px">            <span class="c">if</span> (<span class="v">pos1</span> &gt; sliceLen - 1) <span class="v">pos1</span> -= sliceLen;</div>
<div class="ln" style="top:573.9px;color:#6e6e6e">75</div>
<div class="cl" style="top:572.3px">            <span class="c">if</span> (<span class="v">pos2</span> &gt; pointLen - 1)</div>
<div class="ln" style="top:601.1px;color:#6e6e6e">76</div>
<div class="cl" style="top:599.5px">            {</div>
<div class="ln" style="top:628.3px;color:#6e6e6e">77</div>
<div class="cl" style="top:626.7px">                <span class="v">pos2</span> -= pointLen;</div>
<div class="ln" style="top:655.5px;color:#6e6e6e">78</div>
<div class="cl" style="top:653.9px">                <span class="v">pos2</span>++;</div>
<div class="ln" style="top:682.7px;color:#6e6e6e">79</div>
<div class="cl" style="top:681.1px">            }</div>
<div class="ln" style="top:709.9px;color:#6e6e6e">80</div>
<div class="ln" style="top:737.1px;color:#6e6e6e">81</div>
<div class="cl" style="top:735.5px">            <span class="t">Vector3</span> <span class="v">startPos</span> = sliceList[<span class="v">i</span>].transform.position;</div>
<div class="ln" style="top:764.3px;color:#6e6e6e">82</div>
<div class="cl" style="top:762.7px">            <span class="v">startPos</span>.x = pointList[<span class="v">pos1</span>].transform.position.x; <span class="g">// posList[x] ?</span></div>
<div class="ln" style="top:791.5px;color:#6e6e6e">83</div>
<div class="cl" style="top:789.9px">            <span class="t">Vector3</span> <span class="v">endPos</span> = sliceList[<span class="v">i</span>].transform.position;</div>
<div class="ln" style="top:818.7px;color:#6e6e6e">84</div>
<div class="cl" style="top:817.1px">            <span class="v">endPos</span>.x = pointList[<span class="v">pos2</span>].transform.position.x;</div>
<div class="ln" style="top:845.9px;color:#000">85</div>
<div class="ln" style="top:873.1px;color:#6e6e6e">86</div>
<div class="cl" style="top:871.5px">            <span class="t">Vector3</span> <span class="v">newpos</span> = <span class="t">Vector3</span>.<span class="m">Lerp</span>(<span class="v">startPos</span>, <span class="v">endPos</span>, progressPercent / 100f);</div>
<div class="ln" style="top:900.3px;color:#6e6e6e">87</div>
<div class="cl" style="top:898.7px">            sliceList[<span class="v">i</span>].transform.position = <span class="v">newpos</span>;</div>
<div class="ln" style="top:927.5px;color:#6e6e6e">88</div>
<div class="cl" style="top:925.9px">        }</div>
<div class="ln" style="top:954.7px;color:#6e6e6e">89</div>
<div class="cl" style="top:953.1px">    }</div>
<svg style="position:absolute;left:517.0px;top:846.0px;" width="28" height="26" viewBox="0 0 28 26"><path d="M25 2 L19 8 L13 15" stroke="#5a5a66" stroke-width="2.2" fill="none"/><path d="M22 1 L26.5 2.5 L25 6 Z" fill="#4a4a55"/><path d="M3 19 L9 12.5 Q11 11.5 13 13.5 Q14.5 15.5 13.5 17 L7 23.5 Q4 25 2.5 22.5 Q1.5 21 3 19 Z" fill="#bcd4f2" stroke="#3a6cc0" stroke-width="1.3"/><path d="M6 19 L10 15 M8 21 L12 17" stroke="#3a6cc0" stroke-width="1"/></svg>
</div></div>
<div style="position:absolute;left:1566.0px;top:292.0px;width:19.0px;height:691.0px;background:#e8e8ec;"></div>
<svg style="position:absolute;left:1570.0px;top:297.0px;" width="10" height="7" viewBox="0 0 10 7"><path d="M0.5 6 L5 1 L9.5 6 Z" fill="#c2c3c9"/></svg>
<svg style="position:absolute;left:1570.0px;top:971.0px;" width="10" height="7" viewBox="0 0 10 7"><path d="M0.5 1 L5 6 L9.5 1 Z" fill="#868999"/></svg>
<div style="position:absolute;left:1577.0px;top:668.0px;width:7.0px;height:154.0px;background:#c2c3c9;"></div>
<div style="position:absolute;left:1577.0px;top:330.0px;width:7.0px;height:5.0px;background:#b9bac0;border-radius:2px;"></div>
<div style="position:absolute;left:1577.0px;top:341.0px;width:7.0px;height:11.5px;background:#b9bac0;border-radius:2px;"></div>
<div style="position:absolute;left:1577.0px;top:358.0px;width:7.0px;height:10.0px;background:#b9bac0;border-radius:2px;"></div>
<div style="position:absolute;left:1577.0px;top:523.0px;width:7.0px;height:5.0px;background:#b9bac0;border-radius:2px;"></div>
<div style="position:absolute;left:1567.0px;top:372.0px;width:5.0px;height:12.0px;background:#1f8f1f;"></div>
<div style="position:absolute;left:1567.0px;top:424.0px;width:5.0px;height:11.0px;background:#1f8f1f;"></div>
<div style="position:absolute;left:1567.0px;top:566.0px;width:5.0px;height:12.0px;background:#1f8f1f;"></div>
<div style="position:absolute;left:1567.0px;top:665.0px;width:5.0px;height:19.0px;background:#1f8f1f;"></div>
<div style="position:absolute;left:1567.0px;top:703.0px;width:5.0px;height:83.0px;background:#1f8f1f;"></div>
<div style="position:absolute;left:1567.0px;top:799.0px;width:5.0px;height:11.0px;background:#1f8f1f;"></div>
<div style="position:absolute;left:1566.0px;top:787.0px;width:19.0px;height:2.0px;background:#1a1acd;"></div>
<div style="position:absolute;left:397.0px;top:983.0px;width:1188.0px;height:18.0px;background:#e6e8f3;"></div>
<div style="position:absolute;left:397.0px;top:983.0px;width:61.0px;height:18.0px;background:#f7f8fd;border:1px solid #9aa3c4;"></div>
<span style="position:absolute;left:400.0px;top:987.1px;font-size:12.00px;line-height:1;color:#1e1e1e;white-space:pre;letter-spacing:-0.805px;">160 %</span>
<svg style="position:absolute;left:448.0px;top:991.0px;" width="6" height="4" viewBox="0 0 6 4"><path d="M0 0 H6 L3 3.5 Z" fill="#222"/></svg>
<svg style="position:absolute;left:460.0px;top:985.0px;" width="14" height="14" viewBox="0 0 14 14"><circle cx="7" cy="6" r="4.2" stroke="#7a4fc0" stroke-width="1.3" fill="none"/><path d="M4 10 L2 13.5 M7 6 L9 9 L11 13 M5 3 L3 1" stroke="#7a4fc0" stroke-width="1.2" fill="none"/></svg>
<svg style="position:absolute;left:499.0px;top:985.5px;" width="14" height="14" viewBox="0 0 14 14"><circle cx="7" cy="7" r="6.3" fill="#2e9e3e"/><path d="M3.8 7.2 L6.2 9.6 L10.4 4.8" stroke="#fff" stroke-width="1.6" fill="none"/></svg>
<span style="position:absolute;left:516.0px;top:987.1px;font-size:12.00px;line-height:1;color:#1e1e1e;white-space:pre;letter-spacing:-0.136px;">No issues found</span>
<div style="position:absolute;left:658.0px;top:985.0px;width:1.0px;height:15.0px;background:#b4bbd6;"></div>
<svg style="position:absolute;left:673.0px;top:985.0px;" width="14" height="14" viewBox="0 0 14 14"><path d="M12.5 1.5 L6 8" stroke="#444" stroke-width="1.6"/><path d="M2 10.5 L6 7 L8 9 L5 13 Q3 13.5 2 10.5 Z" fill="#c9a227" stroke="#7a6215" stroke-width="0.8"/><path d="M9 2 L10.5 3.5 M8 0.8 L8.6 2 M11.5 4.5 L12.6 5" stroke="#c9a227" stroke-width="1"/></svg>
<svg style="position:absolute;left:690.0px;top:991.0px;" width="6" height="4" viewBox="0 0 6 4"><path d="M0 0 H6 L3 3.5 Z" fill="#222"/></svg>
<svg style="position:absolute;left:726.0px;top:988.0px;" width="6" height="9" viewBox="0 0 6 9"><path d="M5.5 0.5 L1 4.5 L5.5 8.5 Z" fill="#868999"/></svg>
<div style="position:absolute;left:738.0px;top:988.0px;width:378.0px;height:9.0px;background:#c2c3c9;"></div>
<svg style="position:absolute;left:1378.0px;top:988.0px;" width="6" height="9" viewBox="0 0 6 9"><path d="M0.5 0.5 L5 4.5 L0.5 8.5 Z" fill="#868999"/></svg>
<span style="position:absolute;left:1412.0px;top:987.4px;font-size:11.50px;line-height:1;color:#1e1e1e;white-space:pre;letter-spacing:-0.328px;">Ln: 85</span>
<span style="position:absolute;left:1460.0px;top:987.4px;font-size:11.50px;line-height:1;color:#1e1e1e;white-space:pre;letter-spacing:-0.313px;">Ch: 13</span>
<span style="position:absolute;left:1512.0px;top:987.4px;font-size:11.50px;line-height:1;color:#1e1e1e;white-space:pre;letter-spacing:-0.900px;">SPC</span>
<span style="position:absolute;left:1550.0px;top:987.4px;font-size:11.50px;line-height:1;color:#1e1e1e;white-space:pre;letter-spacing:-0.900px;">CRLF</span>
<div style="position:absolute;left:1593.0px;top:248.0px;width:330.0px;height:23.0px;background:#40508d;border-radius:3px 0 0 0;"></div>
<span style="position:absolute;left:1597.0px;top:254.6px;font-size:12.00px;line-height:1;color:#ffffff;white-space:pre;letter-spacing:-0.103px;">Solution Explorer - Folder View</span>
<svg style="position:absolute;left:1900.0px;top:258.0px;" width="8" height="5" viewBox="0 0 8 5"><path d="M0 0 H8 L4 4.5 Z" fill="#8e9ac4"/></svg>
<div style="position:absolute;left:1593.0px;top:271.0px;width:330.0px;height:26.0px;background:#ccd5f0;"></div>
<svg style="position:absolute;left:1600.0px;top:276.0px;" width="15" height="15" viewBox="0 0 15 15"><circle cx="7.5" cy="7.5" r="6" stroke="#b6bfdc" stroke-width="1.2" fill="none"/><path d="M11 7.5 H4.5 M7 5 L4.5 7.5 L7 10" stroke="#b6bfdc" stroke-width="1.2" fill="none"/></svg>
<svg style="position:absolute;left:1621.0px;top:276.0px;" width="15" height="15" viewBox="0 0 15 15"><circle cx="7.5" cy="7.5" r="6" stroke="#b6bfdc" stroke-width="1.2" fill="none"/><path d="M4 7.5 H10.5 M8 5 L10.5 7.5 L8 10" stroke="#b6bfdc" stroke-width="1.2" fill="none"/></svg>
<svg style="position:absolute;left:1644.0px;top:276.0px;" width="16" height="15" viewBox="0 0 16 15"><path d="M1 8 L8 1.5 L15 8 M3.2 6.5 V14 H6.5 V10 H9.5 V14 H12.8 V6.5" stroke="#222" stroke-width="1.3" fill="none"/></svg>
<svg style="position:absolute;left:1665.0px;top:275.0px;" width="18" height="17" viewBox="0 0 18 17"><rect x="8.5" y="1.5" width="8" height="11" stroke="#222" stroke-width="1.1" fill="none"/><path d="M10.5 4 H14.5 M10.5 6.5 H14.5 M10.5 9 H14.5" stroke="#222" stroke-width="1"/><path d="M7.5 7 L9 7.8 V15 L7.5 15.8 L3.5 12 L1.8 13.5 L0.8 13 V9.8 L1.8 9.3 L3.5 10.8 Z" fill="#7a3fc0"/></svg>
<div style="position:absolute;left:1691.0px;top:275.0px;width:1.0px;height:18.0px;background:#a9b3d6;"></div>
<svg style="position:absolute;left:1696.0px;top:276.0px;" width="16" height="15" viewBox="0 0 16 15"><path d="M3 5.5 H14 M5.5 3 L3 5.5 M2 9.5 H13 M10.5 12 L13 9.5" stroke="#222" stroke-width="1.3" fill="none"/></svg>
<svg style="position:absolute;left:1718.0px;top:276.0px;" width="16" height="15" viewBox="0 0 16 15"><path d="M12.6 5 A5.6 5.6 0 1 1 8 2" stroke="#3a4a7a" stroke-width="1.2" fill="none"/><path d="M8 0 L11.5 2.2 L8 4.6 Z" fill="#3a4a7a"/></svg>
<svg style="position:absolute;left:1740.0px;top:276.0px;" width="16" height="15" viewBox="0 0 16 15"><rect x="1.5" y="1.5" width="12" height="12" stroke="#222" stroke-width="1.2" fill="none"/><path d="M1.5 4 H13.5 M4.5 8.5 H10.5" stroke="#222" stroke-width="1.2"/></svg>
<svg style="position:absolute;left:1762.0px;top:276.0px;" width="17" height="16" viewBox="0 0 17 16"><rect x="1.5" y="4.5" width="8" height="9" stroke="#222" stroke-width="1.2" fill="none"/><path d="M5 4.5 V1.5 H14.5 V11 H9.5 M4 9 H7 M12 4 V7" stroke="#222" stroke-width="1.2" fill="none"/></svg>
<div style="position:absolute;left:1786.0px;top:275.0px;width:1.0px;height:18.0px;background:#a9b3d6;"></div>
<svg style="position:absolute;left:1792.0px;top:277.0px;" width="18" height="14" viewBox="0 0 18 14"><path d="M1 9 H13 V6.5 H4.5 L1 9 Z M1 9 V10.5 H13 V9" stroke="#222" stroke-width="1.1" fill="none"/><path d="M14.5 5 L16.5 3.5 M15 8 H17 M13.5 3 V1.5" stroke="#c9a227" stroke-width="1"/></svg>
<div style="position:absolute;left:1593.0px;top:297.0px;width:330.0px;height:21.0px;background:#f7f8fd;border:1px solid #9aa3c4;"></div>
<span style="position:absolute;left:1598.0px;top:302.1px;font-size:12.00px;line-height:1;color:#6a6a6a;white-space:pre;letter-spacing:-0.146px;">Search Solution Explorer - Folder View (Ctrl+;)</span>
<div style="position:absolute;left:1593px;top:318px;width:330px;height:663px;background:#f5f6fc;overflow:hidden;"><div style="position:absolute;left:-1593px;top:-318px;width:1920px;height:1080px;">
<div style="position:absolute;left:1593.0px;top:643.0px;width:330.0px;height:19.0px;background:#e7e9f1;"></div>
<svg style="position:absolute;left:1601.0px;top:324.0px;" width="9" height="10" viewBox="0 0 9 10"><path d="M7 3 V9 H1 Z" fill="#222"/></svg>
<svg style="position:absolute;left:1624.0px;top:323.5px;" width="14" height="11" viewBox="0 0 14 11"><path d="M0.5 0.5 H5.5 L6.5 2.5 H13.5 V10.5 H0.5 Z" fill="#cdb978" stroke="#8d7d40" stroke-width="1"/><path d="M1 2.5 H6" stroke="#a8975a" stroke-width="0.8"/></svg>
<span style="position:absolute;left:1644.0px;top:323.6px;font-size:12.00px;line-height:1;color:#1e1e1e;white-space:pre;letter-spacing:0.037px;">camstudio (C:\Users\awv\wkspaces\camstudio)</span>
<svg style="position:absolute;left:1619.0px;top:343.0px;" width="9" height="10" viewBox="0 0 9 10"><path d="M7 3 V9 H1 Z" fill="#222"/></svg>
<svg style="position:absolute;left:1642.0px;top:342.5px;" width="14" height="11" viewBox="0 0 14 11"><path d="M0.5 0.5 H5.5 L6.5 2.5 H13.5 V10.5 H0.5 Z" fill="#cdb978" stroke="#8d7d40" stroke-width="1"/><path d="M1 2.5 H6" stroke="#a8975a" stroke-width="0.8"/></svg>
<span style="position:absolute;left:1662.0px;top:342.6px;font-size:12.00px;line-height:1;color:#1e1e1e;white-space:pre;letter-spacing:-0.502px;">Assets</span>
<svg style="position:absolute;left:1636.5px;top:362.0px;" width="9" height="11" viewBox="0 0 9 11"><path d="M2 1 L6.5 5.5 L2 10 Z" stroke="#222" stroke-width="1.1" fill="none"/></svg>
<svg style="position:absolute;left:1660.0px;top:361.5px;" width="14" height="11" viewBox="0 0 14 11"><path d="M0.5 0.5 H5.5 L6.5 2.5 H13.5 V10.5 H0.5 Z" fill="#cdb978" stroke="#8d7d40" stroke-width="1"/><path d="M1 2.5 H6" stroke="#a8975a" stroke-width="0.8"/></svg>
<span style="position:absolute;left:1680.0px;top:361.6px;font-size:12.00px;line-height:1;color:#1e1e1e;white-space:pre;letter-spacing:-0.036px;">Adaptive Performance</span>
<svg style="position:absolute;left:1637.0px;top:381.0px;" width="9" height="10" viewBox="0 0 9 10"><path d="M7 3 V9 H1 Z" fill="#222"/></svg>
<svg style="position:absolute;left:1660.0px;top:380.5px;" width="14" height="11" viewBox="0 0 14 11"><path d="M0.5 0.5 H5.5 L6.5 2.5 H13.5 V10.5 H0.5 Z" fill="#cdb978" stroke="#8d7d40" stroke-width="1"/><path d="M1 2.5 H6" stroke="#a8975a" stroke-width="0.8"/></svg>
<span style="position:absolute;left:1680.0px;top:380.6px;font-size:12.00px;line-height:1;color:#1e1e1e;white-space:pre;letter-spacing:-0.446px;">awv</span>
<svg style="position:absolute;left:1654.5px;top:400.0px;" width="9" height="11" viewBox="0 0 9 11"><path d="M2 1 L6.5 5.5 L2 10 Z" stroke="#222" stroke-width="1.1" fill="none"/></svg>
<svg style="position:absolute;left:1678.0px;top:399.5px;" width="14" height="11" viewBox="0 0 14 11"><path d="M0.5 0.5 H5.5 L6.5 2.5 H13.5 V10.5 H0.5 Z" fill="#cdb978" stroke="#8d7d40" stroke-width="1"/><path d="M1 2.5 H6" stroke="#a8975a" stroke-width="0.8"/></svg>
<span style="position:absolute;left:1698.0px;top:399.6px;font-size:12.00px;line-height:1;color:#1e1e1e;white-space:pre;letter-spacing:0.035px;">campfire2</span>
<svg style="position:absolute;left:1655.0px;top:419.0px;" width="9" height="10" viewBox="0 0 9 10"><path d="M7 3 V9 H1 Z" fill="#222"/></svg>
<svg style="position:absolute;left:1678.0px;top:418.5px;" width="14" height="11" viewBox="0 0 14 11"><path d="M0.5 0.5 H5.5 L6.5 2.5 H13.5 V10.5 H0.5 Z" fill="#cdb978" stroke="#8d7d40" stroke-width="1"/><path d="M1 2.5 H6" stroke="#a8975a" stroke-width="0.8"/></svg>
<span style="position:absolute;left:1698.0px;top:418.6px;font-size:12.00px;line-height:1;color:#1e1e1e;white-space:pre;letter-spacing:-0.128px;">camsetup</span>
<svg style="position:absolute;left:1672.5px;top:438.0px;" width="9" height="11" viewBox="0 0 9 11"><path d="M2 1 L6.5 5.5 L2 10 Z" stroke="#222" stroke-width="1.1" fill="none"/></svg>
<svg style="position:absolute;left:1696.0px;top:437.5px;" width="14" height="11" viewBox="0 0 14 11"><path d="M0.5 0.5 H5.5 L6.5 2.5 H13.5 V10.5 H0.5 Z" fill="#cdb978" stroke="#8d7d40" stroke-width="1"/><path d="M1 2.5 H6" stroke="#a8975a" stroke-width="0.8"/></svg>
<span style="position:absolute;left:1716.0px;top:437.6px;font-size:12.00px;line-height:1;color:#1e1e1e;white-space:pre;letter-spacing:-0.050px;">exports</span>
<svg style="position:absolute;left:1672.5px;top:457.0px;" width="9" height="11" viewBox="0 0 9 11"><path d="M2 1 L6.5 5.5 L2 10 Z" stroke="#222" stroke-width="1.1" fill="none"/></svg>
<svg style="position:absolute;left:1696.0px;top:456.5px;" width="14" height="11" viewBox="0 0 14 11"><path d="M0.5 0.5 H5.5 L6.5 2.5 H13.5 V10.5 H0.5 Z" fill="#cdb978" stroke="#8d7d40" stroke-width="1"/><path d="M1 2.5 H6" stroke="#a8975a" stroke-width="0.8"/></svg>
<span style="position:absolute;left:1716.0px;top:456.6px;font-size:12.00px;line-height:1;color:#1e1e1e;white-space:pre;letter-spacing:-0.334px;">masks</span>
<svg style="position:absolute;left:1672.5px;top:476.0px;" width="9" height="11" viewBox="0 0 9 11"><path d="M2 1 L6.5 5.5 L2 10 Z" stroke="#222" stroke-width="1.1" fill="none"/></svg>
<svg style="position:absolute;left:1696.0px;top:475.5px;" width="14" height="11" viewBox="0 0 14 11"><path d="M0.5 0.5 H5.5 L6.5 2.5 H13.5 V10.5 H0.5 Z" fill="#cdb978" stroke="#8d7d40" stroke-width="1"/><path d="M1 2.5 H6" stroke="#a8975a" stroke-width="0.8"/></svg>
<span style="position:absolute;left:1716.0px;top:475.6px;font-size:12.00px;line-height:1;color:#1e1e1e;white-space:pre;letter-spacing:-0.075px;">materials</span>
<svg style="position:absolute;left:1672.5px;top:495.0px;" width="9" height="11" viewBox="0 0 9 11"><path d="M2 1 L6.5 5.5 L2 10 Z" stroke="#222" stroke-width="1.1" fill="none"/></svg>
<svg style="position:absolute;left:1696.0px;top:494.5px;" width="14" height="11" viewBox="0 0 14 11"><path d="M0.5 0.5 H5.5 L6.5 2.5 H13.5 V10.5 H0.5 Z" fill="#cdb978" stroke="#8d7d40" stroke-width="1"/><path d="M1 2.5 H6" stroke="#a8975a" stroke-width="0.8"/></svg>
<span style="position:absolute;left:1716.0px;top:494.6px;font-size:12.00px;line-height:1;color:#1e1e1e;white-space:pre;letter-spacing:-0.085px;">textures</span>
<span style="position:absolute;left:1696.0px;top:514.5px;font-size:11.00px;line-height:1;color:#3f9a5a;white-space:pre;font-weight:700;letter-spacing:0.219px;">C#</span>
<span style="position:absolute;left:1716.0px;top:513.6px;font-size:12.00px;line-height:1;color:#1e1e1e;white-space:pre;letter-spacing:-0.042px;">anacharcontrol.cs</span>
<svg style="position:absolute;left:1697.0px;top:531.5px;" width="13" height="15" viewBox="0 0 13 15"><path d="M1.5 0.5 H8 L11.5 4 V14.5 H1.5 Z" fill="#f8f9fd" stroke="#555" stroke-width="1"/><path d="M8 0.5 V4 H11.5" stroke="#555" stroke-width="1" fill="none"/></svg>
<span style="position:absolute;left:1716.0px;top:532.6px;font-size:12.00px;line-height:1;color:#1e1e1e;white-space:pre;letter-spacing:-0.033px;">anacharcontrol.cs.meta</span>
<span style="position:absolute;left:1696.0px;top:552.5px;font-size:11.00px;line-height:1;color:#3f9a5a;white-space:pre;font-weight:700;letter-spacing:0.219px;">C#</span>
<span style="position:absolute;left:1716.0px;top:551.6px;font-size:12.00px;line-height:1;color:#1e1e1e;white-space:pre;letter-spacing:0.050px;">cumbaranim.cs</span>
<svg style="position:absolute;left:1697.0px;top:569.5px;" width="13" height="15" viewBox="0 0 13 15"><path d="M1.5 0.5 H8 L11.5 4 V14.5 H1.5 Z" fill="#f8f9fd" stroke="#555" stroke-width="1"/><path d="M8 0.5 V4 H11.5" stroke="#555" stroke-width="1" fill="none"/></svg>
<span style="position:absolute;left:1716.0px;top:570.6px;font-size:12.00px;line-height:1;color:#1e1e1e;white-space:pre;letter-spacing:0.035px;">cumbaranim.cs.meta</span>
<svg style="position:absolute;left:1697.0px;top:588.5px;" width="13" height="15" viewBox="0 0 13 15"><path d="M1.5 0.5 H8 L11.5 4 V14.5 H1.5 Z" fill="#f8f9fd" stroke="#555" stroke-width="1"/><path d="M8 0.5 V4 H11.5" stroke="#555" stroke-width="1" fill="none"/></svg>
<span style="position:absolute;left:1716.0px;top:589.6px;font-size:12.00px;line-height:1;color:#1e1e1e;white-space:pre;letter-spacing:-0.030px;">exports.meta</span>
<svg style="position:absolute;left:1697.0px;top:607.5px;" width="13" height="15" viewBox="0 0 13 15"><path d="M1.5 0.5 H8 L11.5 4 V14.5 H1.5 Z" fill="#f8f9fd" stroke="#555" stroke-width="1"/><path d="M8 0.5 V4 H11.5" stroke="#555" stroke-width="1" fill="none"/></svg>
<span style="position:absolute;left:1716.0px;top:608.6px;font-size:12.00px;line-height:1;color:#1e1e1e;white-space:pre;letter-spacing:-0.168px;">masks.meta</span>
<svg style="position:absolute;left:1697.0px;top:626.5px;" width="13" height="15" viewBox="0 0 13 15"><path d="M1.5 0.5 H8 L11.5 4 V14.5 H1.5 Z" fill="#f8f9fd" stroke="#555" stroke-width="1"/><path d="M8 0.5 V4 H11.5" stroke="#555" stroke-width="1" fill="none"/></svg>
<span style="position:absolute;left:1716.0px;top:627.6px;font-size:12.00px;line-height:1;color:#1e1e1e;white-space:pre;letter-spacing:-0.049px;">materials.meta</span>
<span style="position:absolute;left:1696.0px;top:647.5px;font-size:11.00px;line-height:1;color:#3f9a5a;white-space:pre;font-weight:700;letter-spacing:0.219px;">C#</span>
<span style="position:absolute;left:1716.0px;top:646.6px;font-size:12.00px;line-height:1;color:#1e1e1e;white-space:pre;font-weight:700;letter-spacing:-0.234px;">set4runner.cs</span>
<svg style="position:absolute;left:1697.0px;top:664.5px;" width="13" height="15" viewBox="0 0 13 15"><path d="M1.5 0.5 H8 L11.5 4 V14.5 H1.5 Z" fill="#f8f9fd" stroke="#555" stroke-width="1"/><path d="M8 0.5 V4 H11.5" stroke="#555" stroke-width="1" fill="none"/></svg>
<span style="position:absolute;left:1716.0px;top:665.6px;font-size:12.00px;line-height:1;color:#1e1e1e;white-space:pre;letter-spacing:-0.114px;">set4runner.cs.meta</span>
<svg style="position:absolute;left:1697.0px;top:683.5px;" width="13" height="15" viewBox="0 0 13 15"><path d="M1.5 0.5 H8 L11.5 4 V14.5 H1.5 Z" fill="#f8f9fd" stroke="#555" stroke-width="1"/><path d="M8 0.5 V4 H11.5" stroke="#555" stroke-width="1" fill="none"/></svg>
<span style="position:absolute;left:1716.0px;top:684.6px;font-size:12.00px;line-height:1;color:#1e1e1e;white-space:pre;letter-spacing:-0.053px;">textures.meta</span>
<svg style="position:absolute;left:1654.5px;top:704.0px;" width="9" height="11" viewBox="0 0 9 11"><path d="M2 1 L6.5 5.5 L2 10 Z" stroke="#222" stroke-width="1.1" fill="none"/></svg>
<svg style="position:absolute;left:1678.0px;top:703.5px;" width="14" height="11" viewBox="0 0 14 11"><path d="M0.5 0.5 H5.5 L6.5 2.5 H13.5 V10.5 H0.5 Z" fill="#cdb978" stroke="#8d7d40" stroke-width="1"/><path d="M1 2.5 H6" stroke="#a8975a" stroke-width="0.8"/></svg>
<span style="position:absolute;left:1698.0px;top:703.6px;font-size:12.00px;line-height:1;color:#1e1e1e;white-space:pre;letter-spacing:-0.115px;">dickshape</span>
<svg style="position:absolute;left:1654.5px;top:723.0px;" width="9" height="11" viewBox="0 0 9 11"><path d="M2 1 L6.5 5.5 L2 10 Z" stroke="#222" stroke-width="1.1" fill="none"/></svg>
<svg style="position:absolute;left:1678.0px;top:722.5px;" width="14" height="11" viewBox="0 0 14 11"><path d="M0.5 0.5 H5.5 L6.5 2.5 H13.5 V10.5 H0.5 Z" fill="#cdb978" stroke="#8d7d40" stroke-width="1"/><path d="M1 2.5 H6" stroke="#a8975a" stroke-width="0.8"/></svg>
<span style="position:absolute;left:1698.0px;top:722.6px;font-size:12.00px;line-height:1;color:#1e1e1e;white-space:pre;letter-spacing:-0.187px;">selftest2</span>
<svg style="position:absolute;left:1655.0px;top:742.0px;" width="9" height="10" viewBox="0 0 9 10"><path d="M7 3 V9 H1 Z" fill="#222"/></svg>
<svg style="position:absolute;left:1678.0px;top:741.5px;" width="14" height="11" viewBox="0 0 14 11"><path d="M0.5 0.5 H5.5 L6.5 2.5 H13.5 V10.5 H0.5 Z" fill="#cdb978" stroke="#8d7d40" stroke-width="1"/><path d="M1 2.5 H6" stroke="#a8975a" stroke-width="0.8"/></svg>
<span style="position:absolute;left:1698.0px;top:741.6px;font-size:12.00px;line-height:1;color:#1e1e1e;white-space:pre;letter-spacing:-0.187px;">selftest3</span>
<svg style="position:absolute;left:1672.5px;top:761.0px;" width="9" height="11" viewBox="0 0 9 11"><path d="M2 1 L6.5 5.5 L2 10 Z" stroke="#222" stroke-width="1.1" fill="none"/></svg>
<svg style="position:absolute;left:1696.0px;top:760.5px;" width="14" height="11" viewBox="0 0 14 11"><path d="M0.5 0.5 H5.5 L6.5 2.5 H13.5 V10.5 H0.5 Z" fill="#cdb978" stroke="#8d7d40" stroke-width="1"/><path d="M1 2.5 H6" stroke="#a8975a" stroke-width="0.8"/></svg>
<span style="position:absolute;left:1716.0px;top:760.6px;font-size:12.00px;line-height:1;color:#1e1e1e;white-space:pre;letter-spacing:-0.003px;">clothes</span>
<svg style="position:absolute;left:1672.5px;top:780.0px;" width="9" height="11" viewBox="0 0 9 11"><path d="M2 1 L6.5 5.5 L2 10 Z" stroke="#222" stroke-width="1.1" fill="none"/></svg>
<svg style="position:absolute;left:1696.0px;top:779.5px;" width="14" height="11" viewBox="0 0 14 11"><path d="M0.5 0.5 H5.5 L6.5 2.5 H13.5 V10.5 H0.5 Z" fill="#cdb978" stroke="#8d7d40" stroke-width="1"/><path d="M1 2.5 H6" stroke="#a8975a" stroke-width="0.8"/></svg>
<span style="position:absolute;left:1716.0px;top:779.6px;font-size:12.00px;line-height:1;color:#1e1e1e;white-space:pre;letter-spacing:-0.147px;">gearnew</span>
<svg style="position:absolute;left:1672.5px;top:799.0px;" width="9" height="11" viewBox="0 0 9 11"><path d="M2 1 L6.5 5.5 L2 10 Z" stroke="#222" stroke-width="1.1" fill="none"/></svg>
<svg style="position:absolute;left:1696.0px;top:798.5px;" width="14" height="11" viewBox="0 0 14 11"><path d="M0.5 0.5 H5.5 L6.5 2.5 H13.5 V10.5 H0.5 Z" fill="#cdb978" stroke="#8d7d40" stroke-width="1"/><path d="M1 2.5 H6" stroke="#a8975a" stroke-width="0.8"/></svg>
<span style="position:absolute;left:1716.0px;top:798.6px;font-size:12.00px;line-height:1;color:#1e1e1e;white-space:pre;letter-spacing:-0.002px;">hair</span>
<svg style="position:absolute;left:1672.5px;top:818.0px;" width="9" height="11" viewBox="0 0 9 11"><path d="M2 1 L6.5 5.5 L2 10 Z" stroke="#222" stroke-width="1.1" fill="none"/></svg>
<svg style="position:absolute;left:1696.0px;top:817.5px;" width="14" height="11" viewBox="0 0 14 11"><path d="M0.5 0.5 H5.5 L6.5 2.5 H13.5 V10.5 H0.5 Z" fill="#cdb978" stroke="#8d7d40" stroke-width="1"/><path d="M1 2.5 H6" stroke="#a8975a" stroke-width="0.8"/></svg>
<span style="position:absolute;left:1716.0px;top:817.6px;font-size:12.00px;line-height:1;color:#1e1e1e;white-space:pre;letter-spacing:-0.002px;">icons</span>
<svg style="position:absolute;left:1672.5px;top:837.0px;" width="9" height="11" viewBox="0 0 9 11"><path d="M2 1 L6.5 5.5 L2 10 Z" stroke="#222" stroke-width="1.1" fill="none"/></svg>
<svg style="position:absolute;left:1696.0px;top:836.5px;" width="14" height="11" viewBox="0 0 14 11"><path d="M0.5 0.5 H5.5 L6.5 2.5 H13.5 V10.5 H0.5 Z" fill="#cdb978" stroke="#8d7d40" stroke-width="1"/><path d="M1 2.5 H6" stroke="#a8975a" stroke-width="0.8"/></svg>
<span style="position:absolute;left:1716.0px;top:836.6px;font-size:12.00px;line-height:1;color:#1e1e1e;white-space:pre;letter-spacing:-0.075px;">materials</span>
<svg style="position:absolute;left:1672.5px;top:856.0px;" width="9" height="11" viewBox="0 0 9 11"><path d="M2 1 L6.5 5.5 L2 10 Z" stroke="#222" stroke-width="1.1" fill="none"/></svg>
<svg style="position:absolute;left:1696.0px;top:855.5px;" width="14" height="11" viewBox="0 0 14 11"><path d="M0.5 0.5 H5.5 L6.5 2.5 H13.5 V10.5 H0.5 Z" fill="#cdb978" stroke="#8d7d40" stroke-width="1"/><path d="M1 2.5 H6" stroke="#a8975a" stroke-width="0.8"/></svg>
<span style="position:absolute;left:1716.0px;top:855.6px;font-size:12.00px;line-height:1;color:#1e1e1e;white-space:pre;letter-spacing:-0.146px;">prefabs</span>
<svg style="position:absolute;left:1673.0px;top:875.0px;" width="9" height="10" viewBox="0 0 9 10"><path d="M7 3 V9 H1 Z" fill="#222"/></svg>
<svg style="position:absolute;left:1696.0px;top:874.5px;" width="14" height="11" viewBox="0 0 14 11"><path d="M0.5 0.5 H5.5 L6.5 2.5 H13.5 V10.5 H0.5 Z" fill="#cdb978" stroke="#8d7d40" stroke-width="1"/><path d="M1 2.5 H6" stroke="#a8975a" stroke-width="0.8"/></svg>
<span style="position:absolute;left:1716.0px;top:874.6px;font-size:12.00px;line-height:1;color:#1e1e1e;white-space:pre;letter-spacing:-0.102px;">workpieces</span>
<svg style="position:absolute;left:1714.0px;top:892.0px;" width="14" height="15" viewBox="0 0 14 15"><rect x="0.5" y="1.5" width="13" height="12" fill="#fff" stroke="#444" stroke-width="1"/><path d="M1.5 11 L5 7 L7.5 9.5 L9.5 8 L12.5 11.5" stroke="#2d6fbf" stroke-width="1.2" fill="none"/><circle cx="10" cy="5" r="1.2" fill="#c9a227"/></svg>
<span style="position:absolute;left:1734.0px;top:893.6px;font-size:12.00px;line-height:1;color:#1e1e1e;white-space:pre;letter-spacing:0.092px;">diapergrid.png</span>
<svg style="position:absolute;left:1715.0px;top:911.5px;" width="13" height="15" viewBox="0 0 13 15"><path d="M1.5 0.5 H8 L11.5 4 V14.5 H1.5 Z" fill="#f8f9fd" stroke="#555" stroke-width="1"/><path d="M8 0.5 V4 H11.5" stroke="#555" stroke-width="1" fill="none"/></svg>
<span style="position:absolute;left:1734.0px;top:912.6px;font-size:12.00px;line-height:1;color:#1e1e1e;white-space:pre;letter-spacing:0.067px;">diapergrid.png.meta</span>
<svg style="position:absolute;left:1715.0px;top:930.5px;" width="13" height="15" viewBox="0 0 13 15"><path d="M1.5 0.5 H8 L11.5 4 V14.5 H1.5 Z" fill="#f8f9fd" stroke="#555" stroke-width="1"/><path d="M8 0.5 V4 H11.5" stroke="#555" stroke-width="1" fill="none"/></svg>
<span style="position:absolute;left:1734.0px;top:931.6px;font-size:12.00px;line-height:1;color:#1e1e1e;white-space:pre;letter-spacing:0.017px;">diapergrid_normal</span>
<svg style="position:absolute;left:1715.0px;top:949.5px;" width="13" height="15" viewBox="0 0 13 15"><path d="M1.5 0.5 H8 L11.5 4 V14.5 H1.5 Z" fill="#f8f9fd" stroke="#555" stroke-width="1"/><path d="M8 0.5 V4 H11.5" stroke="#555" stroke-width="1" fill="none"/></svg>
<span style="position:absolute;left:1734.0px;top:950.6px;font-size:12.00px;line-height:1;color:#1e1e1e;white-space:pre;letter-spacing:0.013px;">diapergrid_normal.meta</span>
<svg style="position:absolute;left:1714.0px;top:968.0px;" width="14" height="15" viewBox="0 0 14 15"><rect x="0.5" y="1.5" width="13" height="12" fill="#fff" stroke="#444" stroke-width="1"/><path d="M1.5 11 L5 7 L7.5 9.5 L9.5 8 L12.5 11.5" stroke="#2d6fbf" stroke-width="1.2" fill="none"/><circle cx="10" cy="5" r="1.2" fill="#c9a227"/></svg>
<span style="position:absolute;left:1734.0px;top:969.6px;font-size:12.00px;line-height:1;color:#1e1e1e;white-space:pre;letter-spacing:0.044px;">diapergrid_normal.png</span>
</div></div>
<div style="position:absolute;left:1593.0px;top:981.0px;width:103.0px;height:20.0px;background:#f5f6fc;"></div>
<span style="position:absolute;left:1598.0px;top:984.8px;font-size:12.00px;line-height:1;color:#1e1e1e;white-space:pre;letter-spacing:-0.081px;">Solution Explorer</span>
<div style="position:absolute;left:1695.0px;top:982.0px;width:76.0px;height:19.0px;background:#40508d;"></div>
<span style="position:absolute;left:1700.0px;top:984.8px;font-size:12.00px;line-height:1;color:#e6ebfa;white-space:pre;letter-spacing:-0.245px;">Git Changes</span>
<div style="position:absolute;left:390.0px;top:1007.0px;width:1530.0px;height:25.0px;background:#40508d;"></div>
<svg style="position:absolute;left:394.0px;top:1011.0px;" width="17" height="17" viewBox="0 0 17 17"><path d="M1.5 1.5 H15.5 V12 H6.5 L3.5 15 V12 H1.5 Z" stroke="#fff" stroke-width="1.2" fill="none"/></svg>
<span style="position:absolute;left:418.0px;top:1014.1px;font-size:12.00px;line-height:1;color:#ffffff;white-space:pre;letter-spacing:-0.537px;">Ready</span>
<svg style="position:absolute;left:1608.0px;top:1012.0px;" width="13" height="15" viewBox="0 0 13 15"><path d="M6.5 14 V1.5 M1.5 6.5 L6.5 1.2 L11.5 6.5" stroke="#fff" stroke-width="1.3" fill="none"/></svg>
<span style="position:absolute;left:1630.0px;top:1014.1px;font-size:12.00px;line-height:1;color:#ffffff;white-space:pre;letter-spacing:-0.027px;">Add to Source Control</span>
<svg style="position:absolute;left:1754.0px;top:1017.0px;" width="9" height="5" viewBox="0 0 9 5"><path d="M0 5 H9 L4.5 0 Z" fill="#fff"/></svg>
<svg style="position:absolute;left:1785.0px;top:1012.0px;" width="15" height="15" viewBox="0 0 15 15"><path d="M1 1.5 H14 V4.5 H1 Z M2.5 4.5 V13.5 H12.5 V4.5 M5.5 7.5 H9.5 V10 H5.5 Z M7.5 7.5 V10" stroke="#fff" stroke-width="1.1" fill="none"/></svg>
<span style="position:absolute;left:1806.5px;top:1014.1px;font-size:12.00px;line-height:1;color:#ffffff;white-space:pre;letter-spacing:-0.296px;">Select Repository</span>
<svg style="position:absolute;left:1902.0px;top:1017.0px;" width="9" height="5" viewBox="0 0 9 5"><path d="M0 5 H9 L4.5 0 Z" fill="#fff"/></svg>
<svg style="position:absolute;left:1297.0px;top:381.0px;" width="9" height="17" viewBox="0 0 9 17"><path d="M1 1 H3.5 Q4.5 1 4.5 2 Q4.5 1 5.5 1 H8 M4.5 2 V15 M1 16 H3.5 Q4.5 16 4.5 15 Q4.5 16 5.5 16 H8" stroke="#000" stroke-width="1.2" fill="none"/></svg>
<div style="position:absolute;left:0.0px;top:1040.0px;width:1920.0px;height:40.0px;background:#2a2826;"></div>
<div style="position:absolute;left:98.0px;top:1040.0px;width:45.0px;height:40.0px;background:#373532;"></div>
<div style="position:absolute;left:687.0px;top:1040.0px;width:48.0px;height:40.0px;background:#5b5957;"></div>
<div style="position:absolute;left:99.0px;top:1078.0px;width:47.0px;height:2.0px;background:#f27fc4;"></div>
<div style="position:absolute;left:200.0px;top:1078.0px;width:41.0px;height:2.0px;background:#f27fc4;"></div>
<div style="position:absolute;left:298.0px;top:1078.0px;width:41.0px;height:2.0px;background:#f27fc4;"></div>
<div style="position:absolute;left:347.0px;top:1078.0px;width:41.0px;height:2.0px;background:#f27fc4;"></div>
<div style="position:absolute;left:396.0px;top:1078.0px;width:41.0px;height:2.0px;background:#f27fc4;"></div>
<div style="position:absolute;left:446.0px;top:1078.0px;width:40.0px;height:2.0px;background:#f27fc4;"></div>
<div style="position:absolute;left:495.0px;top:1078.0px;width:40.0px;height:2.0px;background:#f27fc4;"></div>
<div style="position:absolute;left:544.0px;top:1078.0px;width:40.0px;height:2.0px;background:#f27fc4;"></div>
<div style="position:absolute;left:593.0px;top:1078.0px;width:40.0px;height:2.0px;background:#f27fc4;"></div>
<div style="position:absolute;left:642.0px;top:1078.0px;width:40.0px;height:2.0px;background:#f27fc4;"></div>
<div style="position:absolute;left:687.0px;top:1078.0px;width:48.0px;height:2.0px;background:#f27fc4;"></div>
<div style="position:absolute;left:740.0px;top:1078.0px;width:40.0px;height:2.0px;background:#f27fc4;"></div>
<svg style="position:absolute;left:16.0px;top:1052.0px;" width="17" height="17" viewBox="0 0 17 17"><path d="M0 2.4 L7 1.4 V8 H0 Z M8 1.2 L17 0 V8 H8 Z M0 9 H7 V15.6 L0 14.6 Z M8 9 H17 V17 L8 15.8 Z" fill="#ffffff"/></svg>
<svg style="position:absolute;left:62.0px;top:1050.0px;" width="20" height="18" viewBox="0 0 20 18"><rect x="3" y="4.5" width="9" height="8.5" stroke="#fff" stroke-width="1.3" fill="none"/><path d="M2 2.2 H14 M2 15.3 H14 M2 1.5 V3.5 M14 1.5 V3.5 M2 14 V16 M14 14 V16" stroke="#fff" stroke-width="1.2"/><path d="M16.5 2 V16" stroke="#fff" stroke-width="1.2"/><rect x="15.4" y="6" width="2.4" height="2.6" fill="#fff"/></svg>
<svg style="position:absolute;left:111.0px;top:1048.0px;" width="23" height="22" viewBox="0 0 23 22"><path d="M1 3 H8 L10 5 H22 V19 H1 Z" fill="#e9b938"/><path d="M1 7 H22 V19 H1 Z" fill="#f8d466"/><path d="M5 13 H18 V19 H5 Z" fill="#3c8fd8"/><path d="M8 16 H15 V19 H8 Z" fill="#f8d466"/></svg>
<svg style="position:absolute;left:159.0px;top:1048.0px;" width="34" height="28" viewBox="0 0 34 28"><path d="M1 9 L11 2 L21 9 V21 H1 Z" fill="#1e6fc4"/><path d="M1 9 L11 16 L21 9 V21 H1 Z" fill="#3d9be8"/><path d="M3 8 H19 V12 L11 17 L3 12 Z" fill="#d8ecfb"/><path d="M1 9 L11 16 L21 9 V21 H1 Z" fill="#3a96e4"/><circle cx="24" cy="19" r="8" fill="#2a2826" stroke="#cfcfcf" stroke-width="1.2"/></svg>
<span style="position:absolute;left:176.5px;top:1062.2px;font-size:11.50px;line-height:1;color:#ffffff;white-space:pre;font-weight:700;letter-spacing:0.105px;">26</span>
<svg style="position:absolute;left:209.0px;top:1047.0px;" width="24" height="24" viewBox="0 0 24 24"><rect x="0.5" y="0.5" width="23" height="23" rx="6" fill="#e2303e"/><circle cx="12" cy="12" r="8" fill="#ffffff"/><path d="M6.5 8 Q8 6.5 9.5 8 L12 13 L14.5 8 Q16 6.5 17.5 8 L13.5 16.5 Q12 18 10.5 16.5 Z" fill="#e2303e"/></svg>
<svg style="position:absolute;left:258.0px;top:1047.0px;" width="24" height="24" viewBox="0 0 24 24"><defs><linearGradient id="edg" x1="0" y1="1" x2="1" y2="0"><stop offset="0" stop-color="#0f5fc2"/><stop offset="0.5" stop-color="#1c8fdc"/><stop offset="0.78" stop-color="#36c39a"/><stop offset="1" stop-color="#5bd96b"/></linearGradient></defs><circle cx="12" cy="12" r="11.5" fill="url(#edg)"/><path d="M11 12.5 Q12 8.5 16.5 9 Q21.5 10 21 14.5 Q20 17.5 16.5 17 Q13.8 16.3 14 13.5 Q11.5 15 12.5 18 Q14.5 21.5 19.5 20.5 Q22 19.5 23.3 16.5 L23.8 12 L24 24 L12 24 Q8 20 8.5 16 Q9 13.5 11 12.5 Z" fill="#2a2826" opacity="0.0"/><path d="M12 12.8 Q12.5 9.3 16.5 9.5 Q21 10.5 20.8 14.2 Q20 17.3 16.6 16.8 Q14 16.2 14.2 13.6 Q12 15 12.8 17.6 Q14.6 20.8 19 20 Q21.8 19 23 16.2 Q24 13 23 10 L24.5 10 V24 H19 Q13 24.5 9.5 20 Q8 16 12 12.8 Z" fill="#2a2826" opacity="0.92"/><path d="M1 12 Q1.5 5 8 2 Q4 7 5.5 13 Q7 19.5 14 21.5 Q8 24 3.5 19 Q1 16 1 12 Z" fill="#0d55b5" opacity="0.55"/></svg>
<svg style="position:absolute;left:307.0px;top:1048.0px;" width="24" height="24" viewBox="0 0 24 24"><rect x="0" y="0" width="24" height="24" rx="2" fill="#f0731a"/><rect x="3" y="2.2" width="18" height="1.6" fill="#f9b98a"/><path d="M5 8 Q5 6.5 7 6.5 Q9 6.5 10 9 H14 Q15 6.5 17 6.5 Q19 6.5 19 8 Q19 10 17.5 11 V15.5 Q19 16.5 19 18.5 Q19 20 17 20 Q15 20 14 17.5 H10 Q9 20 7 20 Q5 20 5 18.5 Q5 16.5 6.5 15.5 V11 Q5 10 5 8 Z M9.5 11.5 V15 H14.5 V11.5 Z" fill="#ffffff" fill-rule="evenodd"/></svg>
<svg style="position:absolute;left:356.0px;top:1047.0px;" width="24" height="24" viewBox="0 0 24 24"><circle cx="12" cy="12" r="11.5" fill="#1ed760"/><path d="M5.5 8.5 Q12 6.3 18.8 9.6" stroke="#1a1a1a" stroke-width="2.3" fill="none" stroke-linecap="round"/><path d="M6.3 12.5 Q12 10.8 17.6 13.5" stroke="#1a1a1a" stroke-width="1.9" fill="none" stroke-linecap="round"/><path d="M7 16.2 Q12 14.9 16.4 17" stroke="#1a1a1a" stroke-width="1.6" fill="none" stroke-linecap="round"/></svg>
<svg style="position:absolute;left:405.0px;top:1046.0px;" width="24" height="26" viewBox="0 0 24 26"><path d="M12 1 L23 7 V19 L12 25 L1 19 V7 Z" fill="#36c8c0"/><path d="M12 1 L23 7 L12 13 L1 7 Z" fill="#7be6dd"/><path d="M12 6 L19 10 V17 L12 21 L5 17 V10 Z" fill="#e9fffb"/></svg>
<span style="position:absolute;left:411.5px;top:1056.7px;font-size:7.00px;line-height:1;color:#2aa8a0;white-space:pre;font-weight:700;letter-spacing:0.250px;">OK</span>
<svg style="position:absolute;left:454.0px;top:1047.0px;" width="23" height="25" viewBox="0 0 23 25"><path d="M2 1 H18 V24 H2 Z" fill="#f4f4e8"/><path d="M2 9 H18 V24 H2 Z" fill="#8cc63f"/><path d="M2 14 H18 V24 H2 Z" fill="#6cb52d"/><path d="M5 6 V16 M8 6 V16" stroke="#333" stroke-width="1.4"/><path d="M10 11 H16" stroke="#333" stroke-width="1.6"/><path d="M12 13 L21 2 L23 4 L14 15 Z" fill="#f2d23c"/><path d="M2 1 H18" stroke="#c9c9b8" stroke-width="2"/></svg>
<svg style="position:absolute;left:502.0px;top:1049.0px;" width="24" height="20" viewBox="0 0 24 20"><rect x="0.5" y="0.5" width="23" height="19" fill="#0c0c0c" stroke="#6a6a6a" stroke-width="1"/><rect x="1" y="1" width="22" height="3" fill="#d8d8d8"/><path d="M3 7 L5 8.5 L3 10 M6.5 10 H12" stroke="#e8e8e8" stroke-width="1" fill="none"/></svg>
<svg style="position:absolute;left:552.0px;top:1047.0px;" width="23" height="25" viewBox="0 0 23 25"><path d="M11.5 1 L22 7 V18.5 L11.5 24.5 L1 18.5 V7 Z" fill="#d6d6d6"/><path d="M11.5 4 L19.3 8.5 V17 L11.5 21.5 L3.7 17 V8.5 Z" fill="#3a3a3a"/><path d="M11.5 7.5 L16 10 V15.2 L11.5 17.8 L7 15.2 V10 Z M11.5 7.5 V12.6 L7 15.2 M11.5 12.6 L16 15.2" stroke="#f0f0f0" stroke-width="1.4" fill="none"/></svg>
<svg style="position:absolute;left:600.0px;top:1046.0px;" width="26" height="27" viewBox="0 0 26 27"><path d="M8 2 L24 4 L20 25 L2 22 Z" fill="#8ad8c8"/><path d="M8 2 L24 4 L22.5 12 L6 10 Z" fill="#b9efe3"/><path d="M2 22 L20 25 L21 20 L3.5 17.5 Z" fill="#5fb8a6"/></svg>
<svg style="position:absolute;left:650.0px;top:1046.0px;" width="23" height="26" viewBox="0 0 23 26"><path d="M11.5 1 L22 7 V19 L11.5 25 L1 19 V7 Z" fill="#1a1a1a"/><path d="M11.5 2.5 L20.5 7.8 V18.2 L11.5 23.5 L2.5 18.2 V7.8 Z" fill="#2a2a2a" stroke="#8a8a8a" stroke-width="0.8"/><path d="M11.5 6.5 L17 9.7 V16.3 L11.5 19.5 L6 16.3 V9.7 Z M11.5 6.5 V13 L6 16.3 M11.5 13 L17 16.3" stroke="#ffffff" stroke-width="2" fill="none"/></svg>
<svg style="position:absolute;left:698.0px;top:1048.0px;" width="27" height="24" viewBox="0 0 27 24"><path d="M1 6 L6 3.5 L20 17 L20 21.5 L16.5 23 Z" fill="#8a5ad6"/><path d="M1 18 L6 20.5 L20 7 L20 2.5 L16.5 1 Z" fill="#a078e6"/><path d="M17.5 0.8 L26 4.2 V19.8 L17.5 23.2 Z" fill="#b48ef2"/><path d="M1 6 L4.5 8.5 V15.5 L1 18 Z" fill="#7c4ccc"/></svg>
<svg style="position:absolute;left:748.0px;top:1047.0px;" width="24" height="24" viewBox="0 0 24 24"><circle cx="12" cy="12" r="10.8" fill="#2b2a2e" stroke="#d6d6d6" stroke-width="1.4"/><path d="M12 3.5 Q16.5 5 15 10 M20 14 Q17 18.5 12.5 15.5 M5 17 Q4 12 9 10.5" stroke="#d6d6d6" stroke-width="1.5" fill="none"/><circle cx="12" cy="12" r="2" fill="#d6d6d6" opacity="0.0"/></svg>
<svg style="position:absolute;left:1604.0px;top:1055.0px;" width="14" height="8" viewBox="0 0 14 8"><path d="M1 7 L7 1 L13 7" stroke="#fff" stroke-width="1.3" fill="none"/></svg>
<svg style="position:absolute;left:1626.0px;top:1051.0px;" width="18" height="18" viewBox="0 0 18 18"><circle cx="9" cy="9" r="7.8" fill="#222" stroke="#e0e0e0" stroke-width="1.2"/><path d="M9 2.5 Q12.5 4 11 8 M15 10.5 Q12.5 14 9 11.5 M3.5 12.5 Q3 8.5 7 8" stroke="#e0e0e0" stroke-width="1.2" fill="none"/><circle cx="4.5" cy="14" r="3" fill="#e0262e"/></svg>
<svg style="position:absolute;left:1651.0px;top:1051.0px;" width="18" height="18" viewBox="0 0 18 18"><path d="M1 6 Q5 1 10 4.5 Q7 2.5 4 6.5 Q6 9 9.5 8 Q5 11 1 6 Z" fill="#76b900"/><circle cx="5.5" cy="6" r="1.6" fill="#2a2826"/><rect x="5" y="3" width="6" height="5.5" fill="#76b900" opacity="0.6"/><circle cx="12.5" cy="12" r="4.5" fill="#2a2826" stroke="#fff" stroke-width="1.3"/><circle cx="12.5" cy="12" r="1.8" fill="#fff"/></svg>
<svg style="position:absolute;left:1675.0px;top:1051.0px;" width="16" height="18" viewBox="0 0 16 18"><path d="M8 1 L15 5 V13 L8 17 L1 13 V5 Z" fill="#d0d0d0"/><path d="M8 5 L11.5 7 V11 L8 13 L4.5 11 V7 Z M8 5 V9 L4.5 11 M8 9 L11.5 11" stroke="#444" stroke-width="1" fill="none"/></svg>
<svg style="position:absolute;left:1700.0px;top:1050.0px;" width="14" height="20" viewBox="0 0 14 20"><path d="M2 2 L8 0.5 L12 5 V18 L6 19.5 L2 15 Z" fill="#e8207a"/><path d="M5.5 7 L8 6.3 L10 8.5 V13 L7.5 13.7 L5.5 11.5 Z" fill="#ffd3e8"/></svg>
<svg style="position:absolute;left:1722.0px;top:1052.0px;" width="20" height="16" viewBox="0 0 20 16"><path d="M1.5 5.5 H4.5 L8 2 V14 L4.5 10.5 H1.5 Z" stroke="#fff" stroke-width="1.2" fill="none"/><path d="M11.5 5.5 L16.5 10.5 M16.5 5.5 L11.5 10.5" stroke="#fff" stroke-width="1.2"/></svg>
<svg style="position:absolute;left:1746.0px;top:1051.0px;" width="20" height="18" viewBox="0 0 20 18"><rect x="4.5" y="2.5" width="13" height="9" stroke="#fff" stroke-width="1.2" fill="none"/><path d="M11 11.5 V15 M7 15.5 H15" stroke="#fff" stroke-width="1.2"/><rect x="1.5" y="1" width="4" height="5" fill="#2a2826" stroke="#fff" stroke-width="1"/><path d="M3.5 6 V13 H7" stroke="#fff" stroke-width="1" fill="none"/></svg>
<span style="position:absolute;left:1773.0px;top:1045.9px;font-size:11.50px;line-height:1;color:#ffffff;white-space:pre;letter-spacing:-0.640px;">ENG</span>
<span style="position:absolute;left:1778.0px;top:1063.4px;font-size:11.50px;line-height:1;color:#ffffff;white-space:pre;letter-spacing:-0.900px;">US</span>
<span style="position:absolute;left:1812.0px;top:1045.8px;font-size:11.80px;line-height:1;color:#ffffff;white-space:pre;letter-spacing:0.101px;">9:02 AM</span>
<span style="position:absolute;left:1809.0px;top:1063.3px;font-size:11.80px;line-height:1;color:#ffffff;white-space:pre;letter-spacing:-0.166px;">8/29/2024</span>
<svg style="position:absolute;left:1878.0px;top:1050.0px;" width="26" height="26" viewBox="0 0 26 26"><path d="M1.5 1.5 H17.5 V13.5 H6 L3 16.5 V13.5 H1.5 Z" fill="#fff"/><path d="M4 5 H15 M4 8 H15 M4 11 H11" stroke="#2a2826" stroke-width="1.1"/><circle cx="17" cy="16.5" r="7.2" fill="#2a2826" stroke="#d0d0d0" stroke-width="1.1"/></svg>
<span style="position:absolute;left:1890.0px;top:1062.3px;font-size:10.50px;line-height:1;color:#ffffff;white-space:pre;font-weight:700;letter-spacing:-0.589px;">19</span>
<div style="position:absolute;left:1915.0px;top:1046.0px;width:1.0px;height:34.0px;background:#6a6866;"></div>
</body></html>
